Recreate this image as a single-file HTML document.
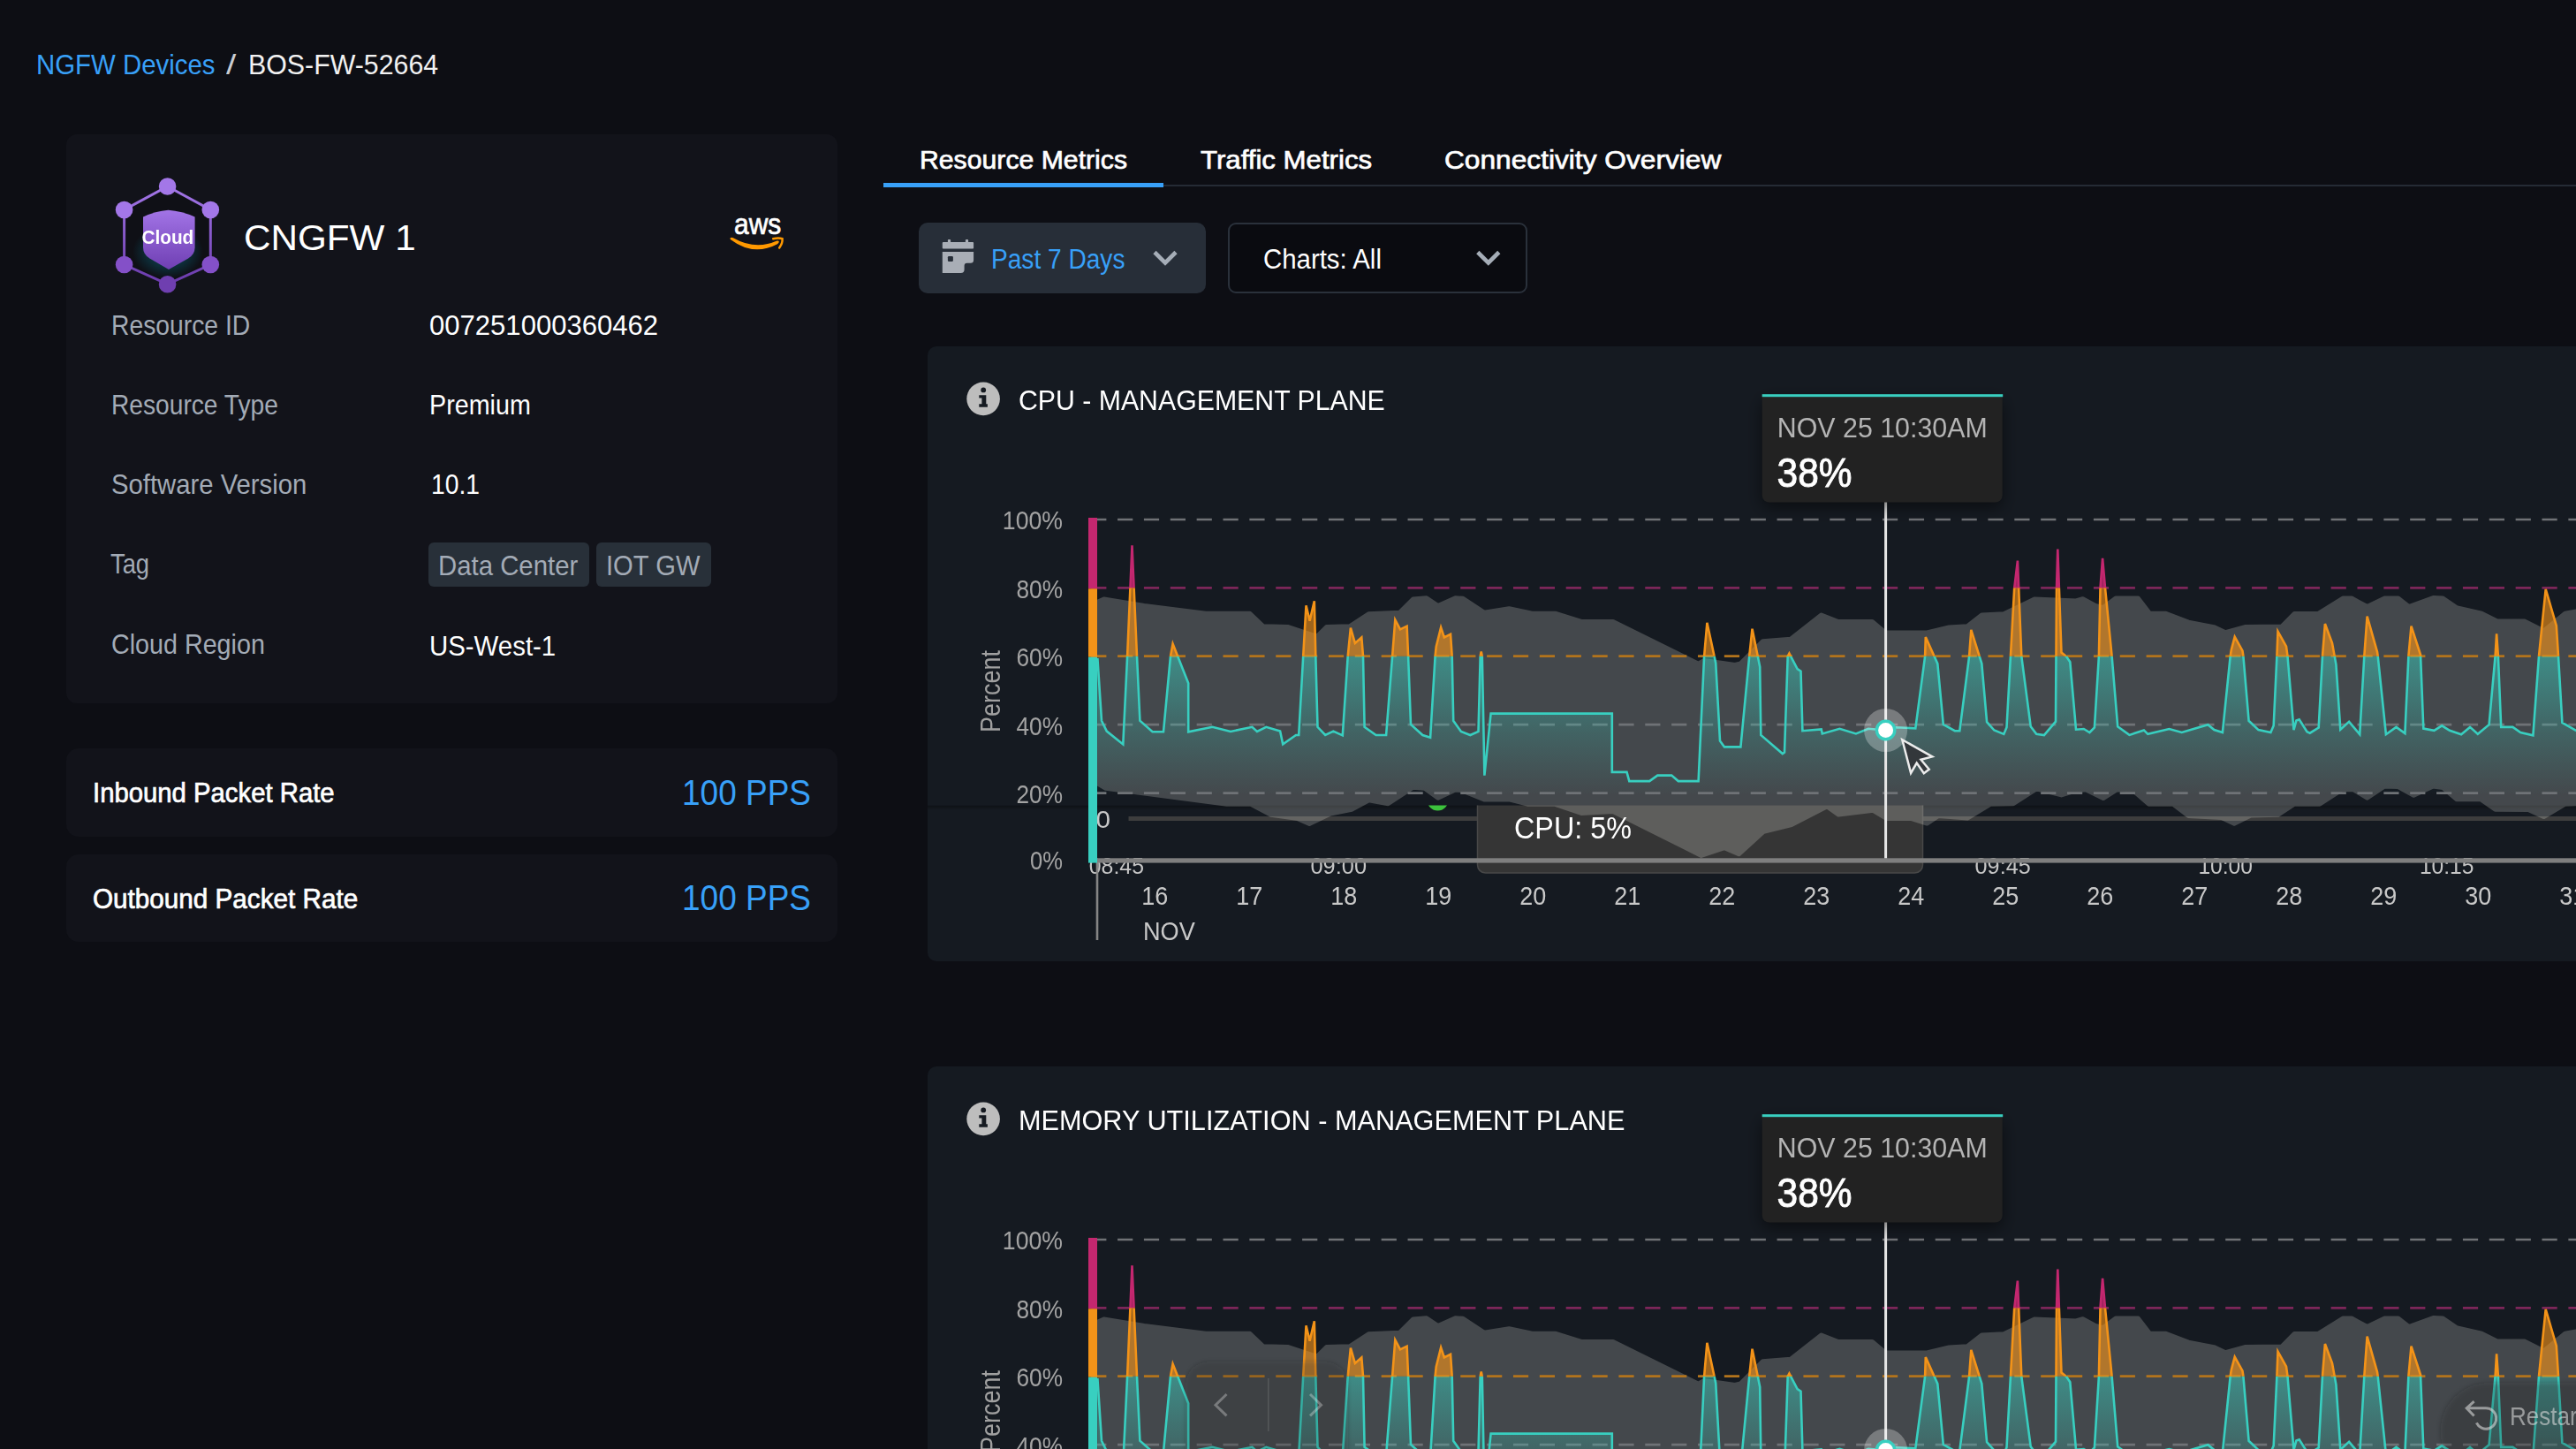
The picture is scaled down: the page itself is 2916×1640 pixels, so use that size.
<!DOCTYPE html>
<html lang="en">
<head>
<meta charset="utf-8">
<title>NGFW Devices / BOS-FW-52664</title>
<style>
*{box-sizing:border-box;margin:0;padding:0}
html,body{width:2916px;height:1640px;overflow:hidden;background:#0d0e14}
body{font-family:'Liberation Sans',sans-serif;color:#fff;position:relative}
#app{position:absolute;left:0;top:0;width:2916px;height:1640px;overflow:hidden}
.t{position:absolute;white-space:nowrap;line-height:1;transform-origin:0 0;display:block}
.box{position:absolute}
.card{background:#12131a;border-radius:12px}
.chip{background:#283039;border-radius:6px}
.btn{border-radius:10px}
svg{position:absolute;left:0;top:0;overflow:visible;will-change:transform}
svg text{font-family:'Liberation Sans',sans-serif}
</style>
</head>
<body>
<div id="app">

<nav class="crumbs">
<span class="t" style="left:40.5px;top:58.4px;font-size:31.4px;color:#38a0f8;transform:scaleX(0.9363);">NGFW Devices</span>
<span class="t" style="left:256.0px;top:58.4px;font-size:31.4px;color:#c9ccd2;transform:scaleX(1.2947);">/</span>
<span class="t" style="left:280.5px;top:58.4px;font-size:31.4px;color:#f2f2f2;transform:scaleX(0.9661);">BOS-FW-52664</span>
</nav>
<section class="box card" style="left:75px;top:152px;width:873px;height:644px"></section>
<div class="device-head">
<span class="t" style="left:275.8px;top:248.6px;font-size:40.0px;color:#ffffff;transform:scaleX(1.0553);">CNGFW 1</span>
<span class="t" style="left:831.0px;top:235.9px;font-size:34.0px;color:#ffffff;transform:scaleX(0.8814);-webkit-text-stroke:.7px #ffffff;">aws</span>
</div>
<dl class="props">
<dt><span class="t" style="left:126.0px;top:353.1px;font-size:30.5px;color:#a3abb6;transform:scaleX(0.9272);">Resource ID</span></dt>
<dd><span class="t" style="left:485.7px;top:353.1px;font-size:30.5px;color:#ffffff;transform:scaleX(1.0184);">007251000360462</span></dd>
<dt><span class="t" style="left:126.0px;top:443.1px;font-size:30.5px;color:#a3abb6;transform:scaleX(0.9231);">Resource Type</span></dt>
<dd><span class="t" style="left:485.7px;top:443.1px;font-size:30.5px;color:#ffffff;transform:scaleX(0.9409);">Premium</span></dd>
<dt><span class="t" style="left:126.0px;top:533.1px;font-size:30.5px;color:#a3abb6;transform:scaleX(0.9599);">Software Version</span></dt>
<dd><span class="t" style="left:487.5px;top:533.1px;font-size:30.5px;color:#ffffff;transform:scaleX(0.9276);">10.1</span></dd>
<dt><span class="t" style="left:124.5px;top:623.4px;font-size:30.5px;color:#a3abb6;transform:scaleX(0.8963);">Tag</span></dt>
<dt><span class="t" style="left:126.0px;top:713.5px;font-size:30.5px;color:#a3abb6;transform:scaleX(0.9407);">Cloud Region</span></dt>
<dd><span class="t" style="left:485.7px;top:715.6px;font-size:30.5px;color:#ffffff;transform:scaleX(0.9638);">US-West-1</span></dd>
</dl>
<span class="box chip" style="left:484.5px;top:614px;width:182.5px;height:50px"></span>
<span class="box chip" style="left:674.6px;top:614px;width:130px;height:50px"></span>
<span class="t" style="left:496.0px;top:625.1px;font-size:30.5px;color:#a3abb6;transform:scaleX(0.9624);">Data Center</span>
<span class="t" style="left:685.5px;top:625.1px;font-size:30.5px;color:#a3abb6;transform:scaleX(0.9565);">IOT GW</span>
<section class="box card" style="left:74.5px;top:847px;width:873.5px;height:99.5px;border-radius:14px"></section>
<section class="box card" style="left:74.5px;top:966.7px;width:873.5px;height:99.5px;border-radius:14px"></section>
<span class="t" style="left:104.8px;top:882.2px;font-size:31.3px;color:#ffffff;transform:scaleX(0.9360);-webkit-text-stroke:.7px #ffffff;">Inbound Packet Rate</span>
<span class="t" style="left:772.0px;top:876.5px;font-size:40.7px;color:#38a0f8;transform:scaleX(0.9089);">100 PPS</span>
<span class="t" style="left:104.8px;top:1002.3px;font-size:31.3px;color:#ffffff;transform:scaleX(0.9479);-webkit-text-stroke:.7px #ffffff;">Outbound Packet Rate</span>
<span class="t" style="left:772.0px;top:996.3px;font-size:40.7px;color:#38a0f8;transform:scaleX(0.9089);">100 PPS</span>
<div class="tabs">
<div class="box" style="left:1000px;top:209px;width:1930px;height:2.4px;background:#252b35"></div>
<div class="box" style="left:1000px;top:207px;width:317px;height:4.5px;background:#38a0f8"></div>
<span class="t" style="left:1041.0px;top:166.0px;font-size:30.1px;color:#ffffff;transform:scaleX(1.0039);-webkit-text-stroke:.7px #ffffff;">Resource Metrics</span>
<span class="t" style="left:1358.9px;top:166.0px;font-size:30.1px;color:#ffffff;transform:scaleX(1.0367);-webkit-text-stroke:.7px #ffffff;">Traffic Metrics</span>
<span class="t" style="left:1635.3px;top:166.0px;font-size:30.1px;color:#ffffff;transform:scaleX(1.0524);-webkit-text-stroke:.7px #ffffff;">Connectivity Overview</span>
</div>
<div class="box btn" style="left:1039.5px;top:251.5px;width:325px;height:80px;background:#272e38"></div>
<div class="box btn" style="left:1390px;top:252px;width:339px;height:79.5px;background:#0a0b10;border:2.4px solid #2a313b;border-radius:9px"></div>
<span class="t" style="left:1121.5px;top:278.7px;font-size:30.8px;color:#38a0f8;transform:scaleX(0.9120);">Past 7 Days</span>
<span class="t" style="left:1429.5px;top:278.7px;font-size:30.8px;color:#ffffff;transform:scaleX(0.9543);">Charts: All</span>
<svg id="gfx" width="2916" height="1640" viewBox="0 0 2916 1640">
<defs><filter id="blur" x="-20%" y="-20%" width="140%" height="150%"><feGaussianBlur stdDeviation="9"/></filter><filter id="soft" x="-10%" y="-10%" width="120%" height="120%"><feGaussianBlur stdDeviation="2.5"/></filter><linearGradient id="shield" x1="0" y1="0" x2="0" y2="1"><stop offset="0" stop-color="#a274e6"/><stop offset="1" stop-color="#6f3fb3"/></linearGradient><linearGradient id="hexg" x1="0" y1="0" x2="0" y2="1"><stop offset="0" stop-color="#a377e8"/><stop offset="1" stop-color="#6a3aab"/></linearGradient><radialGradient id="glow"><stop offset=".55" stop-color="#0a4a5a" stop-opacity=".55"/><stop offset="1" stop-color="#0a4a5a" stop-opacity="0"/></radialGradient></defs>
<g class="cloud-icon">
<polygon points="189.6,211.0 238.3,237.5 238.3,299.5 189.6,321.7 140.6,299.5 140.6,237.5" fill="#0f1016" stroke="url(#hexg)" stroke-width="3"/>
<ellipse cx="190" cy="285" rx="40" ry="30" fill="url(#glow)"/>
<circle cx="189.6" cy="211" r="9.8" fill="#a377e8"/>
<circle cx="238.3" cy="237.5" r="9.8" fill="#a377e8"/>
<circle cx="238.3" cy="299.5" r="9.8" fill="#8450c8"/>
<circle cx="189.6" cy="321.7" r="9.8" fill="#6f3fb0"/>
<circle cx="140.6" cy="299.5" r="9.8" fill="#8450c8"/>
<circle cx="140.6" cy="237.5" r="9.8" fill="#a377e8"/>
<path d="M162 245.5Q176 239 190.5 237.8Q206 239 220.6 245.5V280Q220.6 288 213 292.5L191 305L169.5 292.5Q162 288 162 280Z" fill="url(#shield)"/>
<text x="160.5" y="275.8" font-size="21.2" textLength="58.8" lengthAdjust="spacingAndGlyphs" fill="#ffffff" font-weight="700">Cloud</text>
</g>
<g class="aws-smile"><path d="M826.6 269.4Q828 268 830 269.2Q855 283.5 879.5 272.6Q881.6 272 881.8 273.6Q882 275 880 276.2Q853 290.5 827.2 271.2Q826 270.2 826.6 269.4Z" fill="#ff9900"/><path d="M875.2 270.2Q881.5 268.6 885.6 270.2Q886 275.5 882.2 280.4" fill="none" stroke="#ff9900" stroke-width="2.5" stroke-linecap="round"/></g>
<g class="cal-icon" fill="#a9aeb6"><rect x="1066.8" y="273.9" width="35.3" height="7.6" rx="1"/><rect x="1072.9" y="271" width="3.2" height="4" rx="1"/><rect x="1092.9" y="271" width="3.2" height="4" rx="1"/><path d="M1066.8 285.1h35.3v9.2q0 3.5-3.5 3.5h-4q-3 0-3 3v4.2q0 4-4 4h-20.8z"/><rect x="1072.9" y="290" width="6" height="6" rx="1.2" fill="#272e38"/></g>
<path d="M1307 285.5l12 12l12-12M1672.8 285.5l12 12l12-12" fill="none" stroke="#a5adb7" stroke-width="4.6"/>
<g class="chart" id="chart1">
<rect class="panel" x="1050" y="392" width="1900" height="696" rx="10" fill="#151a21"/>
<defs>
<linearGradient id="c1g" gradientUnits="userSpaceOnUse" x1="0" y1="742.7" x2="0" y2="900"><stop offset="0" stop-color="#38cfc0" stop-opacity=".5"/><stop offset=".55" stop-color="#38cfc0" stop-opacity=".2"/><stop offset="1" stop-color="#38cfc0" stop-opacity="0"/></linearGradient>
<linearGradient id="c1s" x1="0" y1="0" x2="0" y2="1"><stop offset="0" stop-color="#000" stop-opacity=".4"/><stop offset="1" stop-color="#000" stop-opacity="0"/></linearGradient>
<clipPath id="c1t"><rect x="1242" y="742.7" width="1700" height="241.29999999999995"/></clipPath>
<clipPath id="c1o"><rect x="1242" y="665.3" width="1700" height="77.40000000000009"/></clipPath>
<clipPath id="c1p"><rect x="1242" y="500" width="1700" height="165.29999999999995"/></clipPath>
<clipPath id="c1u"><rect x="1040" y="911.5" width="1900" height="90"/></clipPath>
</defs>
<g class="underlay" clip-path="url(#c1u)">
<rect x="1050" y="911.5" width="1900" height="5" fill="url(#c1s)"/>
<text x="1240.5" y="936.5" font-size="28.3" textLength="16.5" lengthAdjust="spacingAndGlyphs" fill="#c9c9c9">0</text>
<rect x="1277.5" y="924" width="1700" height="5" fill="#3d3d3d"/>
<circle cx="1627.5" cy="905.5" r="12" fill="#3cc23c"/>
<rect x="1672.5" y="860" width="504" height="128" rx="9" fill="#353535" stroke="#484848" stroke-width="1.5"/>
<text x="1714.0" y="948.6" font-size="35.3" textLength="133.0" lengthAdjust="spacingAndGlyphs" fill="#ffffff">CPU: 5%</text>
</g>
<text x="1232.8" y="988.8" font-size="25.6" textLength="62.2" lengthAdjust="spacingAndGlyphs" fill="#c6c6c6">08:45</text>
<text x="1483.5" y="988.8" font-size="25.6" textLength="63.5" lengthAdjust="spacingAndGlyphs" fill="#c6c6c6">09:00</text>
<text x="2235.6" y="988.8" font-size="25.6" textLength="63.1" lengthAdjust="spacingAndGlyphs" fill="#c6c6c6">09:45</text>
<text x="2488.4" y="988.8" font-size="25.6" textLength="61.6" lengthAdjust="spacingAndGlyphs" fill="#c6c6c6">10:00</text>
<text x="2738.9" y="988.8" font-size="25.6" textLength="61.6" lengthAdjust="spacingAndGlyphs" fill="#c6c6c6">10:15</text>
<g class="band" opacity=".2"><polygon points="1242.4,681.2 1249.6,677.9 1295.2,685.5 1364.8,694.2 1414.8,694.2 1430.0,708.8 1458.3,709.5 1490.9,720.3 1501.7,709.5 1527.8,708.8 1549.6,694.7 1584.3,693.2 1599.6,677.9 1614.8,676.8 1627.8,685.5 1647.4,676.8 1656.1,677.3 1680.0,693.2 1708.3,688.8 1734.3,694.2 1760.4,694.2 1790.0,703.4 1825.9,703.4 1922.6,751.2 1929.1,747.5 1963.9,752.5 1970.4,750.8 1995.4,725.8 2027.0,723.2 2061.7,696.0 2080.2,703.4 2119.3,703.4 2134.1,716.0 2181.3,716.0 2206.3,709.9 2227.0,708.8 2243.3,696.0 2268.3,694.7 2303.0,677.9 2350.0,679.9 2357.7,677.7 2372.0,685.4 2380.8,687.6 2395.0,677.0 2420.3,677.0 2433.5,694.2 2451.1,694.2 2477.4,704.1 2506.0,709.6 2519.2,715.7 2541.2,709.6 2582.9,709.1 2597.2,694.6 2624.7,694.2 2652.1,677.0 2662.0,677.0 2679.6,686.5 2699.4,677.0 2714.7,677.0 2726.8,686.5 2754.3,676.6 2765.3,677.0 2780.7,687.6 2809.2,694.2 2826.8,703.0 2857.6,703.0 2879.5,714.0 2903.7,694.2 2916.0,692.0 2943.3,692.0 2943.3,909.8 2916.0,909.8 2903.7,910.2 2879.5,924.5 2862.0,916.4 2824.6,916.2 2808.1,904.7 2780.7,904.7 2765.3,891.6 2754.3,890.0 2732.3,900.3 2714.7,890.5 2699.4,890.0 2679.6,903.2 2664.2,893.8 2651.0,893.8 2625.8,910.2 2597.2,910.2 2578.5,922.3 2547.8,923.0 2529.1,932.2 2514.8,925.6 2477.4,923.4 2459.9,910.2 2432.4,910.2 2414.8,894.9 2396.1,893.8 2380.8,903.6 2361.0,893.8 2350.0,894.9 2333.5,899.9 2305.2,892.9 2279.1,909.7 2253.0,910.3 2227.0,926.0 2194.3,923.4 2181.3,932.1 2163.9,926.6 2135.7,926.6 2120.4,917.3 2081.3,922.1 2068.3,912.9 2028.0,933.6 1996.5,941.2 1968.3,966.8 1952.0,959.7 1925.9,968.4 1825.9,918.4 1790.0,920.5 1760.4,910.3 1730.0,910.3 1708.3,904.9 1680.0,904.9 1653.9,894.5 1647.4,894.0 1627.8,903.2 1612.6,892.3 1599.6,891.2 1571.3,909.7 1549.6,905.8 1530.0,916.2 1506.1,921.0 1482.2,932.5 1469.1,926.6 1438.7,922.3 1415.9,910.3 1388.7,910.3 1251.7,892.3 1242.4,886.8" fill="#fffff6" stroke="#fffff6" stroke-width="5" stroke-linejoin="round"/></g>
<line x1="1235.2" x2="2920" y1="588.0" y2="588.0" stroke="#6f7276" stroke-opacity="1" stroke-width="2.7" stroke-dasharray="17.2 12.66"/>
<line x1="1235.2" x2="2920" y1="665.3" y2="665.3" stroke="#7c2659" stroke-opacity="1" stroke-width="2.7" stroke-dasharray="17.2 12.66"/>
<line x1="1235.2" x2="2920" y1="742.7" y2="742.7" stroke="#b3741c" stroke-opacity="1" stroke-width="2.7" stroke-dasharray="17.2 12.66"/>
<line x1="1235.2" x2="2920" y1="820.2" y2="820.2" stroke="#6f7276" stroke-opacity="1" stroke-width="2.7" stroke-dasharray="17.2 12.66"/>
<line x1="1235.2" x2="2920" y1="897.7" y2="897.7" stroke="#6f7276" stroke-opacity="1" stroke-width="2.7" stroke-dasharray="17.2 12.66"/>
<polygon class="fill-teal" clip-path="url(#c1t)" points="1242.4,974.0 1242.4,745.0 1247.0,815.7 1252.8,827.6 1271.3,842.4 1276.1,742.8 1281.5,617.4 1287.0,742.8 1290.4,815.7 1304.6,828.3 1317.0,828.3 1325.0,742.8 1327.6,728.7 1345.2,773.3 1345.2,828.3 1372.4,822.8 1393.0,828.0 1417.4,822.8 1423.0,828.0 1433.3,822.8 1449.1,827.6 1452.2,842.2 1467.0,832.0 1470.2,832.0 1475.2,742.8 1478.5,685.2 1482.6,702.6 1487.8,680.2 1489.3,742.8 1491.5,822.8 1500.2,832.0 1509.3,827.6 1519.8,832.4 1525.7,742.8 1528.9,710.7 1533.9,728.0 1541.3,721.5 1543.0,742.8 1544.6,822.8 1557.6,832.0 1569.1,832.0 1576.1,742.8 1579.3,701.5 1585.0,712.4 1592.6,708.7 1594.1,742.8 1597.0,820.0 1610.4,832.0 1619.1,834.8 1624.6,742.8 1625.7,732.0 1631.1,710.2 1634.8,721.5 1642.0,717.8 1643.7,742.8 1645.2,815.7 1653.9,828.0 1664.3,832.0 1673.5,828.0 1675.7,742.8 1676.7,737.4 1677.8,742.8 1680.4,877.6 1687.6,807.6 1790.0,807.6 1824.8,807.6 1824.8,873.9 1841.5,873.9 1844.3,884.1 1867.2,884.1 1876.3,877.6 1892.2,877.6 1899.8,884.1 1922.6,884.1 1929.1,742.8 1932.4,704.8 1942.2,750.4 1947.0,838.5 1952.0,845.4 1970.4,845.4 1980.2,742.8 1983.5,711.7 1992.2,754.8 1993.3,832.0 2017.8,853.0 2020.0,851.5 2023.7,742.8 2025.4,739.6 2034.6,757.0 2038.5,759.6 2040.4,827.2 2061.7,825.4 2062.8,830.4 2082.4,824.8 2100.9,830.4 2115.0,824.8 2134.1,826.5 2146.5,823.3 2168.3,824.3 2179.1,742.8 2179.8,721.1 2193.3,751.1 2199.8,820.0 2212.8,827.2 2218.3,827.2 2229.1,742.8 2231.3,712.8 2243.3,751.1 2249.1,817.2 2257.4,826.5 2268.3,830.9 2271.5,823.3 2280.2,665.7 2283.9,634.6 2288.3,742.8 2298.7,822.2 2305.2,830.9 2313.9,832.0 2327.0,816.7 2328.0,665.7 2329.3,621.5 2333.5,738.5 2338.9,742.8 2343.3,749.3 2350.0,825.7 2358.8,825.0 2365.4,829.0 2370.9,823.5 2375.9,742.7 2377.5,665.3 2380.1,631.9 2383.0,665.3 2390.6,742.7 2397.2,822.4 2410.4,831.9 2426.9,826.4 2431.3,830.8 2455.5,825.0 2469.7,829.0 2499.4,820.2 2506.4,826.1 2515.9,829.0 2524.7,742.7 2525.8,735.6 2529.7,720.7 2538.5,736.7 2539.4,742.7 2545.6,815.8 2556.5,826.1 2570.4,829.0 2573.7,821.3 2577.4,742.7 2578.5,714.7 2588.0,731.7 2589.5,742.7 2596.5,826.1 2599.4,815.4 2602.7,814.3 2611.5,828.3 2614.8,829.7 2624.7,823.5 2629.0,742.7 2631.9,706.0 2640.0,727.9 2644.4,752.1 2649.3,825.7 2659.1,816.9 2671.2,831.2 2676.3,742.7 2679.6,697.6 2691.0,737.8 2691.7,742.7 2700.9,831.2 2712.5,822.9 2722.4,830.1 2726.4,742.7 2729.5,708.6 2740.0,741.1 2743.3,824.6 2755.4,826.8 2764.2,821.3 2773.0,826.8 2786.1,831.2 2796.0,822.9 2804.8,830.8 2817.6,820.2 2824.6,742.7 2826.1,717.4 2827.9,742.7 2831.2,822.9 2844.4,822.9 2853.2,829.0 2867.4,832.3 2874.0,742.7 2881.7,666.8 2893.8,708.2 2896.0,742.7 2900.4,818.0 2916.0,826.8 2943.3,836.7 2943.3,974.0" fill="url(#c1g)"/>
<polygon class="fill-orange" clip-path="url(#c1o)" points="1242.4,974.0 1242.4,745.0 1247.0,815.7 1252.8,827.6 1271.3,842.4 1276.1,742.8 1281.5,617.4 1287.0,742.8 1290.4,815.7 1304.6,828.3 1317.0,828.3 1325.0,742.8 1327.6,728.7 1345.2,773.3 1345.2,828.3 1372.4,822.8 1393.0,828.0 1417.4,822.8 1423.0,828.0 1433.3,822.8 1449.1,827.6 1452.2,842.2 1467.0,832.0 1470.2,832.0 1475.2,742.8 1478.5,685.2 1482.6,702.6 1487.8,680.2 1489.3,742.8 1491.5,822.8 1500.2,832.0 1509.3,827.6 1519.8,832.4 1525.7,742.8 1528.9,710.7 1533.9,728.0 1541.3,721.5 1543.0,742.8 1544.6,822.8 1557.6,832.0 1569.1,832.0 1576.1,742.8 1579.3,701.5 1585.0,712.4 1592.6,708.7 1594.1,742.8 1597.0,820.0 1610.4,832.0 1619.1,834.8 1624.6,742.8 1625.7,732.0 1631.1,710.2 1634.8,721.5 1642.0,717.8 1643.7,742.8 1645.2,815.7 1653.9,828.0 1664.3,832.0 1673.5,828.0 1675.7,742.8 1676.7,737.4 1677.8,742.8 1680.4,877.6 1687.6,807.6 1790.0,807.6 1824.8,807.6 1824.8,873.9 1841.5,873.9 1844.3,884.1 1867.2,884.1 1876.3,877.6 1892.2,877.6 1899.8,884.1 1922.6,884.1 1929.1,742.8 1932.4,704.8 1942.2,750.4 1947.0,838.5 1952.0,845.4 1970.4,845.4 1980.2,742.8 1983.5,711.7 1992.2,754.8 1993.3,832.0 2017.8,853.0 2020.0,851.5 2023.7,742.8 2025.4,739.6 2034.6,757.0 2038.5,759.6 2040.4,827.2 2061.7,825.4 2062.8,830.4 2082.4,824.8 2100.9,830.4 2115.0,824.8 2134.1,826.5 2146.5,823.3 2168.3,824.3 2179.1,742.8 2179.8,721.1 2193.3,751.1 2199.8,820.0 2212.8,827.2 2218.3,827.2 2229.1,742.8 2231.3,712.8 2243.3,751.1 2249.1,817.2 2257.4,826.5 2268.3,830.9 2271.5,823.3 2280.2,665.7 2283.9,634.6 2288.3,742.8 2298.7,822.2 2305.2,830.9 2313.9,832.0 2327.0,816.7 2328.0,665.7 2329.3,621.5 2333.5,738.5 2338.9,742.8 2343.3,749.3 2350.0,825.7 2358.8,825.0 2365.4,829.0 2370.9,823.5 2375.9,742.7 2377.5,665.3 2380.1,631.9 2383.0,665.3 2390.6,742.7 2397.2,822.4 2410.4,831.9 2426.9,826.4 2431.3,830.8 2455.5,825.0 2469.7,829.0 2499.4,820.2 2506.4,826.1 2515.9,829.0 2524.7,742.7 2525.8,735.6 2529.7,720.7 2538.5,736.7 2539.4,742.7 2545.6,815.8 2556.5,826.1 2570.4,829.0 2573.7,821.3 2577.4,742.7 2578.5,714.7 2588.0,731.7 2589.5,742.7 2596.5,826.1 2599.4,815.4 2602.7,814.3 2611.5,828.3 2614.8,829.7 2624.7,823.5 2629.0,742.7 2631.9,706.0 2640.0,727.9 2644.4,752.1 2649.3,825.7 2659.1,816.9 2671.2,831.2 2676.3,742.7 2679.6,697.6 2691.0,737.8 2691.7,742.7 2700.9,831.2 2712.5,822.9 2722.4,830.1 2726.4,742.7 2729.5,708.6 2740.0,741.1 2743.3,824.6 2755.4,826.8 2764.2,821.3 2773.0,826.8 2786.1,831.2 2796.0,822.9 2804.8,830.8 2817.6,820.2 2824.6,742.7 2826.1,717.4 2827.9,742.7 2831.2,822.9 2844.4,822.9 2853.2,829.0 2867.4,832.3 2874.0,742.7 2881.7,666.8 2893.8,708.2 2896.0,742.7 2900.4,818.0 2916.0,826.8 2943.3,836.7 2943.3,974.0" fill="#f39318" fill-opacity=".62"/>
<polygon class="fill-pink" clip-path="url(#c1p)" points="1242.4,974.0 1242.4,745.0 1247.0,815.7 1252.8,827.6 1271.3,842.4 1276.1,742.8 1281.5,617.4 1287.0,742.8 1290.4,815.7 1304.6,828.3 1317.0,828.3 1325.0,742.8 1327.6,728.7 1345.2,773.3 1345.2,828.3 1372.4,822.8 1393.0,828.0 1417.4,822.8 1423.0,828.0 1433.3,822.8 1449.1,827.6 1452.2,842.2 1467.0,832.0 1470.2,832.0 1475.2,742.8 1478.5,685.2 1482.6,702.6 1487.8,680.2 1489.3,742.8 1491.5,822.8 1500.2,832.0 1509.3,827.6 1519.8,832.4 1525.7,742.8 1528.9,710.7 1533.9,728.0 1541.3,721.5 1543.0,742.8 1544.6,822.8 1557.6,832.0 1569.1,832.0 1576.1,742.8 1579.3,701.5 1585.0,712.4 1592.6,708.7 1594.1,742.8 1597.0,820.0 1610.4,832.0 1619.1,834.8 1624.6,742.8 1625.7,732.0 1631.1,710.2 1634.8,721.5 1642.0,717.8 1643.7,742.8 1645.2,815.7 1653.9,828.0 1664.3,832.0 1673.5,828.0 1675.7,742.8 1676.7,737.4 1677.8,742.8 1680.4,877.6 1687.6,807.6 1790.0,807.6 1824.8,807.6 1824.8,873.9 1841.5,873.9 1844.3,884.1 1867.2,884.1 1876.3,877.6 1892.2,877.6 1899.8,884.1 1922.6,884.1 1929.1,742.8 1932.4,704.8 1942.2,750.4 1947.0,838.5 1952.0,845.4 1970.4,845.4 1980.2,742.8 1983.5,711.7 1992.2,754.8 1993.3,832.0 2017.8,853.0 2020.0,851.5 2023.7,742.8 2025.4,739.6 2034.6,757.0 2038.5,759.6 2040.4,827.2 2061.7,825.4 2062.8,830.4 2082.4,824.8 2100.9,830.4 2115.0,824.8 2134.1,826.5 2146.5,823.3 2168.3,824.3 2179.1,742.8 2179.8,721.1 2193.3,751.1 2199.8,820.0 2212.8,827.2 2218.3,827.2 2229.1,742.8 2231.3,712.8 2243.3,751.1 2249.1,817.2 2257.4,826.5 2268.3,830.9 2271.5,823.3 2280.2,665.7 2283.9,634.6 2288.3,742.8 2298.7,822.2 2305.2,830.9 2313.9,832.0 2327.0,816.7 2328.0,665.7 2329.3,621.5 2333.5,738.5 2338.9,742.8 2343.3,749.3 2350.0,825.7 2358.8,825.0 2365.4,829.0 2370.9,823.5 2375.9,742.7 2377.5,665.3 2380.1,631.9 2383.0,665.3 2390.6,742.7 2397.2,822.4 2410.4,831.9 2426.9,826.4 2431.3,830.8 2455.5,825.0 2469.7,829.0 2499.4,820.2 2506.4,826.1 2515.9,829.0 2524.7,742.7 2525.8,735.6 2529.7,720.7 2538.5,736.7 2539.4,742.7 2545.6,815.8 2556.5,826.1 2570.4,829.0 2573.7,821.3 2577.4,742.7 2578.5,714.7 2588.0,731.7 2589.5,742.7 2596.5,826.1 2599.4,815.4 2602.7,814.3 2611.5,828.3 2614.8,829.7 2624.7,823.5 2629.0,742.7 2631.9,706.0 2640.0,727.9 2644.4,752.1 2649.3,825.7 2659.1,816.9 2671.2,831.2 2676.3,742.7 2679.6,697.6 2691.0,737.8 2691.7,742.7 2700.9,831.2 2712.5,822.9 2722.4,830.1 2726.4,742.7 2729.5,708.6 2740.0,741.1 2743.3,824.6 2755.4,826.8 2764.2,821.3 2773.0,826.8 2786.1,831.2 2796.0,822.9 2804.8,830.8 2817.6,820.2 2824.6,742.7 2826.1,717.4 2827.9,742.7 2831.2,822.9 2844.4,822.9 2853.2,829.0 2867.4,832.3 2874.0,742.7 2881.7,666.8 2893.8,708.2 2896.0,742.7 2900.4,818.0 2916.0,826.8 2943.3,836.7 2943.3,974.0" fill="#c4276f" fill-opacity=".8"/>
<polyline clip-path="url(#c1t)" points="1242.4,745.0 1247.0,815.7 1252.8,827.6 1271.3,842.4 1276.1,742.8 1281.5,617.4 1287.0,742.8 1290.4,815.7 1304.6,828.3 1317.0,828.3 1325.0,742.8 1327.6,728.7 1345.2,773.3 1345.2,828.3 1372.4,822.8 1393.0,828.0 1417.4,822.8 1423.0,828.0 1433.3,822.8 1449.1,827.6 1452.2,842.2 1467.0,832.0 1470.2,832.0 1475.2,742.8 1478.5,685.2 1482.6,702.6 1487.8,680.2 1489.3,742.8 1491.5,822.8 1500.2,832.0 1509.3,827.6 1519.8,832.4 1525.7,742.8 1528.9,710.7 1533.9,728.0 1541.3,721.5 1543.0,742.8 1544.6,822.8 1557.6,832.0 1569.1,832.0 1576.1,742.8 1579.3,701.5 1585.0,712.4 1592.6,708.7 1594.1,742.8 1597.0,820.0 1610.4,832.0 1619.1,834.8 1624.6,742.8 1625.7,732.0 1631.1,710.2 1634.8,721.5 1642.0,717.8 1643.7,742.8 1645.2,815.7 1653.9,828.0 1664.3,832.0 1673.5,828.0 1675.7,742.8 1676.7,737.4 1677.8,742.8 1680.4,877.6 1687.6,807.6 1790.0,807.6 1824.8,807.6 1824.8,873.9 1841.5,873.9 1844.3,884.1 1867.2,884.1 1876.3,877.6 1892.2,877.6 1899.8,884.1 1922.6,884.1 1929.1,742.8 1932.4,704.8 1942.2,750.4 1947.0,838.5 1952.0,845.4 1970.4,845.4 1980.2,742.8 1983.5,711.7 1992.2,754.8 1993.3,832.0 2017.8,853.0 2020.0,851.5 2023.7,742.8 2025.4,739.6 2034.6,757.0 2038.5,759.6 2040.4,827.2 2061.7,825.4 2062.8,830.4 2082.4,824.8 2100.9,830.4 2115.0,824.8 2134.1,826.5 2146.5,823.3 2168.3,824.3 2179.1,742.8 2179.8,721.1 2193.3,751.1 2199.8,820.0 2212.8,827.2 2218.3,827.2 2229.1,742.8 2231.3,712.8 2243.3,751.1 2249.1,817.2 2257.4,826.5 2268.3,830.9 2271.5,823.3 2280.2,665.7 2283.9,634.6 2288.3,742.8 2298.7,822.2 2305.2,830.9 2313.9,832.0 2327.0,816.7 2328.0,665.7 2329.3,621.5 2333.5,738.5 2338.9,742.8 2343.3,749.3 2350.0,825.7 2358.8,825.0 2365.4,829.0 2370.9,823.5 2375.9,742.7 2377.5,665.3 2380.1,631.9 2383.0,665.3 2390.6,742.7 2397.2,822.4 2410.4,831.9 2426.9,826.4 2431.3,830.8 2455.5,825.0 2469.7,829.0 2499.4,820.2 2506.4,826.1 2515.9,829.0 2524.7,742.7 2525.8,735.6 2529.7,720.7 2538.5,736.7 2539.4,742.7 2545.6,815.8 2556.5,826.1 2570.4,829.0 2573.7,821.3 2577.4,742.7 2578.5,714.7 2588.0,731.7 2589.5,742.7 2596.5,826.1 2599.4,815.4 2602.7,814.3 2611.5,828.3 2614.8,829.7 2624.7,823.5 2629.0,742.7 2631.9,706.0 2640.0,727.9 2644.4,752.1 2649.3,825.7 2659.1,816.9 2671.2,831.2 2676.3,742.7 2679.6,697.6 2691.0,737.8 2691.7,742.7 2700.9,831.2 2712.5,822.9 2722.4,830.1 2726.4,742.7 2729.5,708.6 2740.0,741.1 2743.3,824.6 2755.4,826.8 2764.2,821.3 2773.0,826.8 2786.1,831.2 2796.0,822.9 2804.8,830.8 2817.6,820.2 2824.6,742.7 2826.1,717.4 2827.9,742.7 2831.2,822.9 2844.4,822.9 2853.2,829.0 2867.4,832.3 2874.0,742.7 2881.7,666.8 2893.8,708.2 2896.0,742.7 2900.4,818.0 2916.0,826.8 2943.3,836.7" fill="none" stroke="#38cfc0" stroke-width="2.6" stroke-linejoin="miter"/>
<polyline clip-path="url(#c1o)" points="1242.4,745.0 1247.0,815.7 1252.8,827.6 1271.3,842.4 1276.1,742.8 1281.5,617.4 1287.0,742.8 1290.4,815.7 1304.6,828.3 1317.0,828.3 1325.0,742.8 1327.6,728.7 1345.2,773.3 1345.2,828.3 1372.4,822.8 1393.0,828.0 1417.4,822.8 1423.0,828.0 1433.3,822.8 1449.1,827.6 1452.2,842.2 1467.0,832.0 1470.2,832.0 1475.2,742.8 1478.5,685.2 1482.6,702.6 1487.8,680.2 1489.3,742.8 1491.5,822.8 1500.2,832.0 1509.3,827.6 1519.8,832.4 1525.7,742.8 1528.9,710.7 1533.9,728.0 1541.3,721.5 1543.0,742.8 1544.6,822.8 1557.6,832.0 1569.1,832.0 1576.1,742.8 1579.3,701.5 1585.0,712.4 1592.6,708.7 1594.1,742.8 1597.0,820.0 1610.4,832.0 1619.1,834.8 1624.6,742.8 1625.7,732.0 1631.1,710.2 1634.8,721.5 1642.0,717.8 1643.7,742.8 1645.2,815.7 1653.9,828.0 1664.3,832.0 1673.5,828.0 1675.7,742.8 1676.7,737.4 1677.8,742.8 1680.4,877.6 1687.6,807.6 1790.0,807.6 1824.8,807.6 1824.8,873.9 1841.5,873.9 1844.3,884.1 1867.2,884.1 1876.3,877.6 1892.2,877.6 1899.8,884.1 1922.6,884.1 1929.1,742.8 1932.4,704.8 1942.2,750.4 1947.0,838.5 1952.0,845.4 1970.4,845.4 1980.2,742.8 1983.5,711.7 1992.2,754.8 1993.3,832.0 2017.8,853.0 2020.0,851.5 2023.7,742.8 2025.4,739.6 2034.6,757.0 2038.5,759.6 2040.4,827.2 2061.7,825.4 2062.8,830.4 2082.4,824.8 2100.9,830.4 2115.0,824.8 2134.1,826.5 2146.5,823.3 2168.3,824.3 2179.1,742.8 2179.8,721.1 2193.3,751.1 2199.8,820.0 2212.8,827.2 2218.3,827.2 2229.1,742.8 2231.3,712.8 2243.3,751.1 2249.1,817.2 2257.4,826.5 2268.3,830.9 2271.5,823.3 2280.2,665.7 2283.9,634.6 2288.3,742.8 2298.7,822.2 2305.2,830.9 2313.9,832.0 2327.0,816.7 2328.0,665.7 2329.3,621.5 2333.5,738.5 2338.9,742.8 2343.3,749.3 2350.0,825.7 2358.8,825.0 2365.4,829.0 2370.9,823.5 2375.9,742.7 2377.5,665.3 2380.1,631.9 2383.0,665.3 2390.6,742.7 2397.2,822.4 2410.4,831.9 2426.9,826.4 2431.3,830.8 2455.5,825.0 2469.7,829.0 2499.4,820.2 2506.4,826.1 2515.9,829.0 2524.7,742.7 2525.8,735.6 2529.7,720.7 2538.5,736.7 2539.4,742.7 2545.6,815.8 2556.5,826.1 2570.4,829.0 2573.7,821.3 2577.4,742.7 2578.5,714.7 2588.0,731.7 2589.5,742.7 2596.5,826.1 2599.4,815.4 2602.7,814.3 2611.5,828.3 2614.8,829.7 2624.7,823.5 2629.0,742.7 2631.9,706.0 2640.0,727.9 2644.4,752.1 2649.3,825.7 2659.1,816.9 2671.2,831.2 2676.3,742.7 2679.6,697.6 2691.0,737.8 2691.7,742.7 2700.9,831.2 2712.5,822.9 2722.4,830.1 2726.4,742.7 2729.5,708.6 2740.0,741.1 2743.3,824.6 2755.4,826.8 2764.2,821.3 2773.0,826.8 2786.1,831.2 2796.0,822.9 2804.8,830.8 2817.6,820.2 2824.6,742.7 2826.1,717.4 2827.9,742.7 2831.2,822.9 2844.4,822.9 2853.2,829.0 2867.4,832.3 2874.0,742.7 2881.7,666.8 2893.8,708.2 2896.0,742.7 2900.4,818.0 2916.0,826.8 2943.3,836.7" fill="none" stroke="#f39318" stroke-width="2.6" stroke-linejoin="miter"/>
<polyline clip-path="url(#c1p)" points="1242.4,745.0 1247.0,815.7 1252.8,827.6 1271.3,842.4 1276.1,742.8 1281.5,617.4 1287.0,742.8 1290.4,815.7 1304.6,828.3 1317.0,828.3 1325.0,742.8 1327.6,728.7 1345.2,773.3 1345.2,828.3 1372.4,822.8 1393.0,828.0 1417.4,822.8 1423.0,828.0 1433.3,822.8 1449.1,827.6 1452.2,842.2 1467.0,832.0 1470.2,832.0 1475.2,742.8 1478.5,685.2 1482.6,702.6 1487.8,680.2 1489.3,742.8 1491.5,822.8 1500.2,832.0 1509.3,827.6 1519.8,832.4 1525.7,742.8 1528.9,710.7 1533.9,728.0 1541.3,721.5 1543.0,742.8 1544.6,822.8 1557.6,832.0 1569.1,832.0 1576.1,742.8 1579.3,701.5 1585.0,712.4 1592.6,708.7 1594.1,742.8 1597.0,820.0 1610.4,832.0 1619.1,834.8 1624.6,742.8 1625.7,732.0 1631.1,710.2 1634.8,721.5 1642.0,717.8 1643.7,742.8 1645.2,815.7 1653.9,828.0 1664.3,832.0 1673.5,828.0 1675.7,742.8 1676.7,737.4 1677.8,742.8 1680.4,877.6 1687.6,807.6 1790.0,807.6 1824.8,807.6 1824.8,873.9 1841.5,873.9 1844.3,884.1 1867.2,884.1 1876.3,877.6 1892.2,877.6 1899.8,884.1 1922.6,884.1 1929.1,742.8 1932.4,704.8 1942.2,750.4 1947.0,838.5 1952.0,845.4 1970.4,845.4 1980.2,742.8 1983.5,711.7 1992.2,754.8 1993.3,832.0 2017.8,853.0 2020.0,851.5 2023.7,742.8 2025.4,739.6 2034.6,757.0 2038.5,759.6 2040.4,827.2 2061.7,825.4 2062.8,830.4 2082.4,824.8 2100.9,830.4 2115.0,824.8 2134.1,826.5 2146.5,823.3 2168.3,824.3 2179.1,742.8 2179.8,721.1 2193.3,751.1 2199.8,820.0 2212.8,827.2 2218.3,827.2 2229.1,742.8 2231.3,712.8 2243.3,751.1 2249.1,817.2 2257.4,826.5 2268.3,830.9 2271.5,823.3 2280.2,665.7 2283.9,634.6 2288.3,742.8 2298.7,822.2 2305.2,830.9 2313.9,832.0 2327.0,816.7 2328.0,665.7 2329.3,621.5 2333.5,738.5 2338.9,742.8 2343.3,749.3 2350.0,825.7 2358.8,825.0 2365.4,829.0 2370.9,823.5 2375.9,742.7 2377.5,665.3 2380.1,631.9 2383.0,665.3 2390.6,742.7 2397.2,822.4 2410.4,831.9 2426.9,826.4 2431.3,830.8 2455.5,825.0 2469.7,829.0 2499.4,820.2 2506.4,826.1 2515.9,829.0 2524.7,742.7 2525.8,735.6 2529.7,720.7 2538.5,736.7 2539.4,742.7 2545.6,815.8 2556.5,826.1 2570.4,829.0 2573.7,821.3 2577.4,742.7 2578.5,714.7 2588.0,731.7 2589.5,742.7 2596.5,826.1 2599.4,815.4 2602.7,814.3 2611.5,828.3 2614.8,829.7 2624.7,823.5 2629.0,742.7 2631.9,706.0 2640.0,727.9 2644.4,752.1 2649.3,825.7 2659.1,816.9 2671.2,831.2 2676.3,742.7 2679.6,697.6 2691.0,737.8 2691.7,742.7 2700.9,831.2 2712.5,822.9 2722.4,830.1 2726.4,742.7 2729.5,708.6 2740.0,741.1 2743.3,824.6 2755.4,826.8 2764.2,821.3 2773.0,826.8 2786.1,831.2 2796.0,822.9 2804.8,830.8 2817.6,820.2 2824.6,742.7 2826.1,717.4 2827.9,742.7 2831.2,822.9 2844.4,822.9 2853.2,829.0 2867.4,832.3 2874.0,742.7 2881.7,666.8 2893.8,708.2 2896.0,742.7 2900.4,818.0 2916.0,826.8 2943.3,836.7" fill="none" stroke="#c4276f" stroke-width="2.6" stroke-linejoin="miter"/>
<rect x="1242" y="971.3" width="1700" height="5.3" fill="#7f7f7f"/>
<rect x="1240.7" y="976" width="2.6" height="88" fill="#858585"/>
<rect x="1232" y="586" width="10" height="80.29999999999995" fill="#c4276f"/>
<rect x="1232" y="666.3" width="10" height="77.40000000000009" fill="#f39318"/>
<rect x="1232" y="743.7" width="10" height="232.89999999999998" fill="#38cfc0"/>
<text x="1134.8" y="599.3" font-size="29.4" textLength="68.2" lengthAdjust="spacingAndGlyphs" fill="#a3a3a3">100%</text>
<text x="1150.5" y="676.6" font-size="29.4" textLength="52.5" lengthAdjust="spacingAndGlyphs" fill="#a3a3a3">80%</text>
<text x="1150.5" y="754.0" font-size="29.4" textLength="52.5" lengthAdjust="spacingAndGlyphs" fill="#a3a3a3">60%</text>
<text x="1150.5" y="831.5" font-size="29.4" textLength="52.5" lengthAdjust="spacingAndGlyphs" fill="#a3a3a3">40%</text>
<text x="1150.5" y="909.0" font-size="29.4" textLength="52.5" lengthAdjust="spacingAndGlyphs" fill="#a3a3a3">20%</text>
<text x="1166.0" y="984.0" font-size="29.4" textLength="37.0" lengthAdjust="spacingAndGlyphs" fill="#a3a3a3">0%</text>
<g transform="translate(1132.2 829) rotate(-90)"><text x="0.0" y="0.0" font-size="31.0" textLength="93.0" lengthAdjust="spacingAndGlyphs" fill="#a0a0a0">Percent</text></g>
<text x="1292.2" y="1024.1" font-size="29.1" textLength="30.0" lengthAdjust="spacingAndGlyphs" fill="#c8c8c8">16</text>
<text x="1399.2" y="1024.1" font-size="29.1" textLength="30.0" lengthAdjust="spacingAndGlyphs" fill="#c8c8c8">17</text>
<text x="1506.2" y="1024.1" font-size="29.1" textLength="30.0" lengthAdjust="spacingAndGlyphs" fill="#c8c8c8">18</text>
<text x="1613.2" y="1024.1" font-size="29.1" textLength="30.0" lengthAdjust="spacingAndGlyphs" fill="#c8c8c8">19</text>
<text x="1720.2" y="1024.1" font-size="29.1" textLength="30.0" lengthAdjust="spacingAndGlyphs" fill="#c8c8c8">20</text>
<text x="1827.2" y="1024.1" font-size="29.1" textLength="30.0" lengthAdjust="spacingAndGlyphs" fill="#c8c8c8">21</text>
<text x="1934.2" y="1024.1" font-size="29.1" textLength="30.0" lengthAdjust="spacingAndGlyphs" fill="#c8c8c8">22</text>
<text x="2041.2" y="1024.1" font-size="29.1" textLength="30.0" lengthAdjust="spacingAndGlyphs" fill="#c8c8c8">23</text>
<text x="2148.2" y="1024.1" font-size="29.1" textLength="30.0" lengthAdjust="spacingAndGlyphs" fill="#c8c8c8">24</text>
<text x="2255.2" y="1024.1" font-size="29.1" textLength="30.0" lengthAdjust="spacingAndGlyphs" fill="#c8c8c8">25</text>
<text x="2362.2" y="1024.1" font-size="29.1" textLength="30.0" lengthAdjust="spacingAndGlyphs" fill="#c8c8c8">26</text>
<text x="2469.2" y="1024.1" font-size="29.1" textLength="30.0" lengthAdjust="spacingAndGlyphs" fill="#c8c8c8">27</text>
<text x="2576.2" y="1024.1" font-size="29.1" textLength="30.0" lengthAdjust="spacingAndGlyphs" fill="#c8c8c8">28</text>
<text x="2683.2" y="1024.1" font-size="29.1" textLength="30.0" lengthAdjust="spacingAndGlyphs" fill="#c8c8c8">29</text>
<text x="2790.2" y="1024.1" font-size="29.1" textLength="30.0" lengthAdjust="spacingAndGlyphs" fill="#c8c8c8">30</text>
<text x="2897.2" y="1024.1" font-size="29.1" textLength="30.0" lengthAdjust="spacingAndGlyphs" fill="#c8c8c8">31</text>
<text x="1294.0" y="1063.9" font-size="29.1" textLength="58.8" lengthAdjust="spacingAndGlyphs" fill="#c8c8c8">NOV</text>
<rect x="2133.1" y="560" width="3" height="411.29999999999995" fill="#e6e6e6"/>
<circle cx="2134.6" cy="826.5" r="24.5" fill="#ffffff" fill-opacity=".28"/>
<circle cx="2134.6" cy="826.5" r="10.2" fill="#ffffff" stroke="#38cfc0" stroke-width="3.4"/>
<polygon class="cursor" points="2153.3,837.2 2163.1,875.0 2169.7,863.6 2177.8,875.2 2183.7,870.7 2174.5,859.8 2187.3,856.4" fill="#33373b" stroke="#ececec" stroke-width="2.5" stroke-linejoin="miter"/>
<g class="tooltip"><rect x="1994.7" y="447" width="272" height="121.5" rx="8" fill="#000" fill-opacity=".5" filter="url(#blur)" transform="translate(0 6)"/>
<path d="M1994.7 446.3h272v114.19999999999999a8 8 0 0 1 -8 8h-256a8 8 0 0 1 -8 -8z" fill="#222222"/>
<rect x="1994.7" y="446.2" width="272.5" height="3" fill="#38cfc0"/>
<text x="2011.8" y="494.6" font-size="30.8" textLength="237.9" lengthAdjust="spacingAndGlyphs" fill="#b4b4b4">NOV 25 10:30AM</text>
<text x="2011.6" y="551.2" font-size="46.5" textLength="85.0" lengthAdjust="spacingAndGlyphs" fill="#ffffff" stroke="#ffffff" stroke-width=".9">38%</text>
</g>
<circle cx="1113.1" cy="451.4" r="18.8" fill="#bdbdbd"/>
<circle cx="1113.2" cy="441.4" r="2.9" fill="#151a21"/>
<path d="M1108.3 447.3h8v10h1.6v3.4h-9.6v-3.4h3.1v-6.9h-3.1z" fill="#151a21"/>
<text x="1152.9" y="464.0" font-size="31.4" textLength="414.9" lengthAdjust="spacingAndGlyphs" fill="#ffffff">CPU - MANAGEMENT PLANE</text>
</g>
<g class="chart" id="chart2">
<rect class="panel" x="1050" y="1207" width="1900" height="520" rx="10" fill="#151a21"/>
<defs>
<linearGradient id="c2g" gradientUnits="userSpaceOnUse" x1="0" y1="1557.7" x2="0" y2="1715"><stop offset="0" stop-color="#38cfc0" stop-opacity=".5"/><stop offset=".55" stop-color="#38cfc0" stop-opacity=".2"/><stop offset="1" stop-color="#38cfc0" stop-opacity="0"/></linearGradient>
<linearGradient id="c2s" x1="0" y1="0" x2="0" y2="1"><stop offset="0" stop-color="#000" stop-opacity=".4"/><stop offset="1" stop-color="#000" stop-opacity="0"/></linearGradient>
<clipPath id="c2t"><rect x="1242" y="1557.7" width="1700" height="241.29999999999995"/></clipPath>
<clipPath id="c2o"><rect x="1242" y="1480.3" width="1700" height="77.40000000000009"/></clipPath>
<clipPath id="c2p"><rect x="1242" y="1315" width="1700" height="165.29999999999995"/></clipPath>
<clipPath id="c2u"><rect x="1040" y="1726.5" width="1900" height="90"/></clipPath>
</defs>
<g class="band" opacity=".2"><polygon points="1242.4,1496.2 1249.6,1492.9 1295.2,1500.5 1364.8,1509.2 1414.8,1509.2 1430.0,1523.8 1458.3,1524.5 1490.9,1535.3 1501.7,1524.5 1527.8,1523.8 1549.6,1509.7 1584.3,1508.2 1599.6,1492.9 1614.8,1491.8 1627.8,1500.5 1647.4,1491.8 1656.1,1492.3 1680.0,1508.2 1708.3,1503.8 1734.3,1509.2 1760.4,1509.2 1790.0,1518.4 1825.9,1518.4 1922.6,1566.2 1929.1,1562.5 1963.9,1567.5 1970.4,1565.8 1995.4,1540.8 2027.0,1538.2 2061.7,1511.0 2080.2,1518.4 2119.3,1518.4 2134.1,1531.0 2181.3,1531.0 2206.3,1524.9 2227.0,1523.8 2243.3,1511.0 2268.3,1509.7 2303.0,1492.9 2350.0,1494.9 2357.7,1492.7 2372.0,1500.4 2380.8,1502.6 2395.0,1492.0 2420.3,1492.0 2433.5,1509.2 2451.1,1509.2 2477.4,1519.1 2506.0,1524.6 2519.2,1530.7 2541.2,1524.6 2582.9,1524.1 2597.2,1509.6 2624.7,1509.2 2652.1,1492.0 2662.0,1492.0 2679.6,1501.5 2699.4,1492.0 2714.7,1492.0 2726.8,1501.5 2754.3,1491.6 2765.3,1492.0 2780.7,1502.6 2809.2,1509.2 2826.8,1518.0 2857.6,1518.0 2879.5,1529.0 2903.7,1509.2 2916.0,1507.0 2943.3,1507.0 2943.3,1724.8 2916.0,1724.8 2903.7,1725.2 2879.5,1739.5 2862.0,1731.4 2824.6,1731.2 2808.1,1719.7 2780.7,1719.7 2765.3,1706.6 2754.3,1705.0 2732.3,1715.3 2714.7,1705.5 2699.4,1705.0 2679.6,1718.2 2664.2,1708.8 2651.0,1708.8 2625.8,1725.2 2597.2,1725.2 2578.5,1737.3 2547.8,1738.0 2529.1,1747.2 2514.8,1740.6 2477.4,1738.4 2459.9,1725.2 2432.4,1725.2 2414.8,1709.9 2396.1,1708.8 2380.8,1718.6 2361.0,1708.8 2350.0,1709.9 2333.5,1714.9 2305.2,1707.9 2279.1,1724.7 2253.0,1725.3 2227.0,1741.0 2194.3,1738.4 2181.3,1747.1 2163.9,1741.6 2135.7,1741.6 2120.4,1732.3 2081.3,1737.1 2068.3,1727.9 2028.0,1748.6 1996.5,1756.2 1968.3,1781.8 1952.0,1774.7 1925.9,1783.4 1825.9,1733.4 1790.0,1735.5 1760.4,1725.3 1730.0,1725.3 1708.3,1719.9 1680.0,1719.9 1653.9,1709.5 1647.4,1709.0 1627.8,1718.2 1612.6,1707.3 1599.6,1706.2 1571.3,1724.7 1549.6,1720.8 1530.0,1731.2 1506.1,1736.0 1482.2,1747.5 1469.1,1741.6 1438.7,1737.3 1415.9,1725.3 1388.7,1725.3 1251.7,1707.3 1242.4,1701.8" fill="#fffff6" stroke="#fffff6" stroke-width="5" stroke-linejoin="round"/></g>
<line x1="1235.2" x2="2920" y1="1403.0" y2="1403.0" stroke="#6f7276" stroke-opacity="1" stroke-width="2.7" stroke-dasharray="17.2 12.66"/>
<line x1="1235.2" x2="2920" y1="1480.3" y2="1480.3" stroke="#7c2659" stroke-opacity="1" stroke-width="2.7" stroke-dasharray="17.2 12.66"/>
<line x1="1235.2" x2="2920" y1="1557.7" y2="1557.7" stroke="#b3741c" stroke-opacity="1" stroke-width="2.7" stroke-dasharray="17.2 12.66"/>
<line x1="1235.2" x2="2920" y1="1635.2" y2="1635.2" stroke="#6f7276" stroke-opacity="1" stroke-width="2.7" stroke-dasharray="17.2 12.66"/>
<line x1="1235.2" x2="2920" y1="1712.7" y2="1712.7" stroke="#6f7276" stroke-opacity="1" stroke-width="2.7" stroke-dasharray="17.2 12.66"/>
<polygon class="fill-teal" clip-path="url(#c2t)" points="1242.4,1789.0 1242.4,1560.0 1247.0,1630.7 1252.8,1642.6 1271.3,1657.4 1276.1,1557.8 1281.5,1432.4 1287.0,1557.8 1290.4,1630.7 1304.6,1643.3 1317.0,1643.3 1325.0,1557.8 1327.6,1543.7 1345.2,1588.3 1345.2,1643.3 1372.4,1637.8 1393.0,1643.0 1417.4,1637.8 1423.0,1643.0 1433.3,1637.8 1449.1,1642.6 1452.2,1657.2 1467.0,1647.0 1470.2,1647.0 1475.2,1557.8 1478.5,1500.2 1482.6,1517.6 1487.8,1495.2 1489.3,1557.8 1491.5,1637.8 1500.2,1647.0 1509.3,1642.6 1519.8,1647.4 1525.7,1557.8 1528.9,1525.7 1533.9,1543.0 1541.3,1536.5 1543.0,1557.8 1544.6,1637.8 1557.6,1647.0 1569.1,1647.0 1576.1,1557.8 1579.3,1516.5 1585.0,1527.4 1592.6,1523.7 1594.1,1557.8 1597.0,1635.0 1610.4,1647.0 1619.1,1649.8 1624.6,1557.8 1625.7,1547.0 1631.1,1525.2 1634.8,1536.5 1642.0,1532.8 1643.7,1557.8 1645.2,1630.7 1653.9,1643.0 1664.3,1647.0 1673.5,1643.0 1675.7,1557.8 1676.7,1552.4 1677.8,1557.8 1680.4,1692.6 1687.6,1622.6 1790.0,1622.6 1824.8,1622.6 1824.8,1688.9 1841.5,1688.9 1844.3,1699.1 1867.2,1699.1 1876.3,1692.6 1892.2,1692.6 1899.8,1699.1 1922.6,1699.1 1929.1,1557.8 1932.4,1519.8 1942.2,1565.4 1947.0,1653.5 1952.0,1660.4 1970.4,1660.4 1980.2,1557.8 1983.5,1526.7 1992.2,1569.8 1993.3,1647.0 2017.8,1668.0 2020.0,1666.5 2023.7,1557.8 2025.4,1554.6 2034.6,1572.0 2038.5,1574.6 2040.4,1642.2 2061.7,1640.4 2062.8,1645.4 2082.4,1639.8 2100.9,1645.4 2115.0,1639.8 2134.1,1641.5 2146.5,1638.3 2168.3,1639.3 2179.1,1557.8 2179.8,1536.1 2193.3,1566.1 2199.8,1635.0 2212.8,1642.2 2218.3,1642.2 2229.1,1557.8 2231.3,1527.8 2243.3,1566.1 2249.1,1632.2 2257.4,1641.5 2268.3,1645.9 2271.5,1638.3 2280.2,1480.7 2283.9,1449.6 2288.3,1557.8 2298.7,1637.2 2305.2,1645.9 2313.9,1647.0 2327.0,1631.7 2328.0,1480.7 2329.3,1436.5 2333.5,1553.5 2338.9,1557.8 2343.3,1564.3 2350.0,1640.7 2358.8,1640.0 2365.4,1644.0 2370.9,1638.5 2375.9,1557.7 2377.5,1480.3 2380.1,1446.9 2383.0,1480.3 2390.6,1557.7 2397.2,1637.4 2410.4,1646.9 2426.9,1641.4 2431.3,1645.8 2455.5,1640.0 2469.7,1644.0 2499.4,1635.2 2506.4,1641.1 2515.9,1644.0 2524.7,1557.7 2525.8,1550.6 2529.7,1535.7 2538.5,1551.7 2539.4,1557.7 2545.6,1630.8 2556.5,1641.1 2570.4,1644.0 2573.7,1636.3 2577.4,1557.7 2578.5,1529.7 2588.0,1546.7 2589.5,1557.7 2596.5,1641.1 2599.4,1630.4 2602.7,1629.3 2611.5,1643.3 2614.8,1644.7 2624.7,1638.5 2629.0,1557.7 2631.9,1521.0 2640.0,1542.9 2644.4,1567.1 2649.3,1640.7 2659.1,1631.9 2671.2,1646.2 2676.3,1557.7 2679.6,1512.6 2691.0,1552.8 2691.7,1557.7 2700.9,1646.2 2712.5,1637.9 2722.4,1645.1 2726.4,1557.7 2729.5,1523.6 2740.0,1556.1 2743.3,1639.6 2755.4,1641.8 2764.2,1636.3 2773.0,1641.8 2786.1,1646.2 2796.0,1637.9 2804.8,1645.8 2817.6,1635.2 2824.6,1557.7 2826.1,1532.4 2827.9,1557.7 2831.2,1637.9 2844.4,1637.9 2853.2,1644.0 2867.4,1647.3 2874.0,1557.7 2881.7,1481.8 2893.8,1523.2 2896.0,1557.7 2900.4,1633.0 2916.0,1641.8 2943.3,1651.7 2943.3,1789.0" fill="url(#c2g)"/>
<polygon class="fill-orange" clip-path="url(#c2o)" points="1242.4,1789.0 1242.4,1560.0 1247.0,1630.7 1252.8,1642.6 1271.3,1657.4 1276.1,1557.8 1281.5,1432.4 1287.0,1557.8 1290.4,1630.7 1304.6,1643.3 1317.0,1643.3 1325.0,1557.8 1327.6,1543.7 1345.2,1588.3 1345.2,1643.3 1372.4,1637.8 1393.0,1643.0 1417.4,1637.8 1423.0,1643.0 1433.3,1637.8 1449.1,1642.6 1452.2,1657.2 1467.0,1647.0 1470.2,1647.0 1475.2,1557.8 1478.5,1500.2 1482.6,1517.6 1487.8,1495.2 1489.3,1557.8 1491.5,1637.8 1500.2,1647.0 1509.3,1642.6 1519.8,1647.4 1525.7,1557.8 1528.9,1525.7 1533.9,1543.0 1541.3,1536.5 1543.0,1557.8 1544.6,1637.8 1557.6,1647.0 1569.1,1647.0 1576.1,1557.8 1579.3,1516.5 1585.0,1527.4 1592.6,1523.7 1594.1,1557.8 1597.0,1635.0 1610.4,1647.0 1619.1,1649.8 1624.6,1557.8 1625.7,1547.0 1631.1,1525.2 1634.8,1536.5 1642.0,1532.8 1643.7,1557.8 1645.2,1630.7 1653.9,1643.0 1664.3,1647.0 1673.5,1643.0 1675.7,1557.8 1676.7,1552.4 1677.8,1557.8 1680.4,1692.6 1687.6,1622.6 1790.0,1622.6 1824.8,1622.6 1824.8,1688.9 1841.5,1688.9 1844.3,1699.1 1867.2,1699.1 1876.3,1692.6 1892.2,1692.6 1899.8,1699.1 1922.6,1699.1 1929.1,1557.8 1932.4,1519.8 1942.2,1565.4 1947.0,1653.5 1952.0,1660.4 1970.4,1660.4 1980.2,1557.8 1983.5,1526.7 1992.2,1569.8 1993.3,1647.0 2017.8,1668.0 2020.0,1666.5 2023.7,1557.8 2025.4,1554.6 2034.6,1572.0 2038.5,1574.6 2040.4,1642.2 2061.7,1640.4 2062.8,1645.4 2082.4,1639.8 2100.9,1645.4 2115.0,1639.8 2134.1,1641.5 2146.5,1638.3 2168.3,1639.3 2179.1,1557.8 2179.8,1536.1 2193.3,1566.1 2199.8,1635.0 2212.8,1642.2 2218.3,1642.2 2229.1,1557.8 2231.3,1527.8 2243.3,1566.1 2249.1,1632.2 2257.4,1641.5 2268.3,1645.9 2271.5,1638.3 2280.2,1480.7 2283.9,1449.6 2288.3,1557.8 2298.7,1637.2 2305.2,1645.9 2313.9,1647.0 2327.0,1631.7 2328.0,1480.7 2329.3,1436.5 2333.5,1553.5 2338.9,1557.8 2343.3,1564.3 2350.0,1640.7 2358.8,1640.0 2365.4,1644.0 2370.9,1638.5 2375.9,1557.7 2377.5,1480.3 2380.1,1446.9 2383.0,1480.3 2390.6,1557.7 2397.2,1637.4 2410.4,1646.9 2426.9,1641.4 2431.3,1645.8 2455.5,1640.0 2469.7,1644.0 2499.4,1635.2 2506.4,1641.1 2515.9,1644.0 2524.7,1557.7 2525.8,1550.6 2529.7,1535.7 2538.5,1551.7 2539.4,1557.7 2545.6,1630.8 2556.5,1641.1 2570.4,1644.0 2573.7,1636.3 2577.4,1557.7 2578.5,1529.7 2588.0,1546.7 2589.5,1557.7 2596.5,1641.1 2599.4,1630.4 2602.7,1629.3 2611.5,1643.3 2614.8,1644.7 2624.7,1638.5 2629.0,1557.7 2631.9,1521.0 2640.0,1542.9 2644.4,1567.1 2649.3,1640.7 2659.1,1631.9 2671.2,1646.2 2676.3,1557.7 2679.6,1512.6 2691.0,1552.8 2691.7,1557.7 2700.9,1646.2 2712.5,1637.9 2722.4,1645.1 2726.4,1557.7 2729.5,1523.6 2740.0,1556.1 2743.3,1639.6 2755.4,1641.8 2764.2,1636.3 2773.0,1641.8 2786.1,1646.2 2796.0,1637.9 2804.8,1645.8 2817.6,1635.2 2824.6,1557.7 2826.1,1532.4 2827.9,1557.7 2831.2,1637.9 2844.4,1637.9 2853.2,1644.0 2867.4,1647.3 2874.0,1557.7 2881.7,1481.8 2893.8,1523.2 2896.0,1557.7 2900.4,1633.0 2916.0,1641.8 2943.3,1651.7 2943.3,1789.0" fill="#f39318" fill-opacity=".62"/>
<polygon class="fill-pink" clip-path="url(#c2p)" points="1242.4,1789.0 1242.4,1560.0 1247.0,1630.7 1252.8,1642.6 1271.3,1657.4 1276.1,1557.8 1281.5,1432.4 1287.0,1557.8 1290.4,1630.7 1304.6,1643.3 1317.0,1643.3 1325.0,1557.8 1327.6,1543.7 1345.2,1588.3 1345.2,1643.3 1372.4,1637.8 1393.0,1643.0 1417.4,1637.8 1423.0,1643.0 1433.3,1637.8 1449.1,1642.6 1452.2,1657.2 1467.0,1647.0 1470.2,1647.0 1475.2,1557.8 1478.5,1500.2 1482.6,1517.6 1487.8,1495.2 1489.3,1557.8 1491.5,1637.8 1500.2,1647.0 1509.3,1642.6 1519.8,1647.4 1525.7,1557.8 1528.9,1525.7 1533.9,1543.0 1541.3,1536.5 1543.0,1557.8 1544.6,1637.8 1557.6,1647.0 1569.1,1647.0 1576.1,1557.8 1579.3,1516.5 1585.0,1527.4 1592.6,1523.7 1594.1,1557.8 1597.0,1635.0 1610.4,1647.0 1619.1,1649.8 1624.6,1557.8 1625.7,1547.0 1631.1,1525.2 1634.8,1536.5 1642.0,1532.8 1643.7,1557.8 1645.2,1630.7 1653.9,1643.0 1664.3,1647.0 1673.5,1643.0 1675.7,1557.8 1676.7,1552.4 1677.8,1557.8 1680.4,1692.6 1687.6,1622.6 1790.0,1622.6 1824.8,1622.6 1824.8,1688.9 1841.5,1688.9 1844.3,1699.1 1867.2,1699.1 1876.3,1692.6 1892.2,1692.6 1899.8,1699.1 1922.6,1699.1 1929.1,1557.8 1932.4,1519.8 1942.2,1565.4 1947.0,1653.5 1952.0,1660.4 1970.4,1660.4 1980.2,1557.8 1983.5,1526.7 1992.2,1569.8 1993.3,1647.0 2017.8,1668.0 2020.0,1666.5 2023.7,1557.8 2025.4,1554.6 2034.6,1572.0 2038.5,1574.6 2040.4,1642.2 2061.7,1640.4 2062.8,1645.4 2082.4,1639.8 2100.9,1645.4 2115.0,1639.8 2134.1,1641.5 2146.5,1638.3 2168.3,1639.3 2179.1,1557.8 2179.8,1536.1 2193.3,1566.1 2199.8,1635.0 2212.8,1642.2 2218.3,1642.2 2229.1,1557.8 2231.3,1527.8 2243.3,1566.1 2249.1,1632.2 2257.4,1641.5 2268.3,1645.9 2271.5,1638.3 2280.2,1480.7 2283.9,1449.6 2288.3,1557.8 2298.7,1637.2 2305.2,1645.9 2313.9,1647.0 2327.0,1631.7 2328.0,1480.7 2329.3,1436.5 2333.5,1553.5 2338.9,1557.8 2343.3,1564.3 2350.0,1640.7 2358.8,1640.0 2365.4,1644.0 2370.9,1638.5 2375.9,1557.7 2377.5,1480.3 2380.1,1446.9 2383.0,1480.3 2390.6,1557.7 2397.2,1637.4 2410.4,1646.9 2426.9,1641.4 2431.3,1645.8 2455.5,1640.0 2469.7,1644.0 2499.4,1635.2 2506.4,1641.1 2515.9,1644.0 2524.7,1557.7 2525.8,1550.6 2529.7,1535.7 2538.5,1551.7 2539.4,1557.7 2545.6,1630.8 2556.5,1641.1 2570.4,1644.0 2573.7,1636.3 2577.4,1557.7 2578.5,1529.7 2588.0,1546.7 2589.5,1557.7 2596.5,1641.1 2599.4,1630.4 2602.7,1629.3 2611.5,1643.3 2614.8,1644.7 2624.7,1638.5 2629.0,1557.7 2631.9,1521.0 2640.0,1542.9 2644.4,1567.1 2649.3,1640.7 2659.1,1631.9 2671.2,1646.2 2676.3,1557.7 2679.6,1512.6 2691.0,1552.8 2691.7,1557.7 2700.9,1646.2 2712.5,1637.9 2722.4,1645.1 2726.4,1557.7 2729.5,1523.6 2740.0,1556.1 2743.3,1639.6 2755.4,1641.8 2764.2,1636.3 2773.0,1641.8 2786.1,1646.2 2796.0,1637.9 2804.8,1645.8 2817.6,1635.2 2824.6,1557.7 2826.1,1532.4 2827.9,1557.7 2831.2,1637.9 2844.4,1637.9 2853.2,1644.0 2867.4,1647.3 2874.0,1557.7 2881.7,1481.8 2893.8,1523.2 2896.0,1557.7 2900.4,1633.0 2916.0,1641.8 2943.3,1651.7 2943.3,1789.0" fill="#c4276f" fill-opacity=".8"/>
<polyline clip-path="url(#c2t)" points="1242.4,1560.0 1247.0,1630.7 1252.8,1642.6 1271.3,1657.4 1276.1,1557.8 1281.5,1432.4 1287.0,1557.8 1290.4,1630.7 1304.6,1643.3 1317.0,1643.3 1325.0,1557.8 1327.6,1543.7 1345.2,1588.3 1345.2,1643.3 1372.4,1637.8 1393.0,1643.0 1417.4,1637.8 1423.0,1643.0 1433.3,1637.8 1449.1,1642.6 1452.2,1657.2 1467.0,1647.0 1470.2,1647.0 1475.2,1557.8 1478.5,1500.2 1482.6,1517.6 1487.8,1495.2 1489.3,1557.8 1491.5,1637.8 1500.2,1647.0 1509.3,1642.6 1519.8,1647.4 1525.7,1557.8 1528.9,1525.7 1533.9,1543.0 1541.3,1536.5 1543.0,1557.8 1544.6,1637.8 1557.6,1647.0 1569.1,1647.0 1576.1,1557.8 1579.3,1516.5 1585.0,1527.4 1592.6,1523.7 1594.1,1557.8 1597.0,1635.0 1610.4,1647.0 1619.1,1649.8 1624.6,1557.8 1625.7,1547.0 1631.1,1525.2 1634.8,1536.5 1642.0,1532.8 1643.7,1557.8 1645.2,1630.7 1653.9,1643.0 1664.3,1647.0 1673.5,1643.0 1675.7,1557.8 1676.7,1552.4 1677.8,1557.8 1680.4,1692.6 1687.6,1622.6 1790.0,1622.6 1824.8,1622.6 1824.8,1688.9 1841.5,1688.9 1844.3,1699.1 1867.2,1699.1 1876.3,1692.6 1892.2,1692.6 1899.8,1699.1 1922.6,1699.1 1929.1,1557.8 1932.4,1519.8 1942.2,1565.4 1947.0,1653.5 1952.0,1660.4 1970.4,1660.4 1980.2,1557.8 1983.5,1526.7 1992.2,1569.8 1993.3,1647.0 2017.8,1668.0 2020.0,1666.5 2023.7,1557.8 2025.4,1554.6 2034.6,1572.0 2038.5,1574.6 2040.4,1642.2 2061.7,1640.4 2062.8,1645.4 2082.4,1639.8 2100.9,1645.4 2115.0,1639.8 2134.1,1641.5 2146.5,1638.3 2168.3,1639.3 2179.1,1557.8 2179.8,1536.1 2193.3,1566.1 2199.8,1635.0 2212.8,1642.2 2218.3,1642.2 2229.1,1557.8 2231.3,1527.8 2243.3,1566.1 2249.1,1632.2 2257.4,1641.5 2268.3,1645.9 2271.5,1638.3 2280.2,1480.7 2283.9,1449.6 2288.3,1557.8 2298.7,1637.2 2305.2,1645.9 2313.9,1647.0 2327.0,1631.7 2328.0,1480.7 2329.3,1436.5 2333.5,1553.5 2338.9,1557.8 2343.3,1564.3 2350.0,1640.7 2358.8,1640.0 2365.4,1644.0 2370.9,1638.5 2375.9,1557.7 2377.5,1480.3 2380.1,1446.9 2383.0,1480.3 2390.6,1557.7 2397.2,1637.4 2410.4,1646.9 2426.9,1641.4 2431.3,1645.8 2455.5,1640.0 2469.7,1644.0 2499.4,1635.2 2506.4,1641.1 2515.9,1644.0 2524.7,1557.7 2525.8,1550.6 2529.7,1535.7 2538.5,1551.7 2539.4,1557.7 2545.6,1630.8 2556.5,1641.1 2570.4,1644.0 2573.7,1636.3 2577.4,1557.7 2578.5,1529.7 2588.0,1546.7 2589.5,1557.7 2596.5,1641.1 2599.4,1630.4 2602.7,1629.3 2611.5,1643.3 2614.8,1644.7 2624.7,1638.5 2629.0,1557.7 2631.9,1521.0 2640.0,1542.9 2644.4,1567.1 2649.3,1640.7 2659.1,1631.9 2671.2,1646.2 2676.3,1557.7 2679.6,1512.6 2691.0,1552.8 2691.7,1557.7 2700.9,1646.2 2712.5,1637.9 2722.4,1645.1 2726.4,1557.7 2729.5,1523.6 2740.0,1556.1 2743.3,1639.6 2755.4,1641.8 2764.2,1636.3 2773.0,1641.8 2786.1,1646.2 2796.0,1637.9 2804.8,1645.8 2817.6,1635.2 2824.6,1557.7 2826.1,1532.4 2827.9,1557.7 2831.2,1637.9 2844.4,1637.9 2853.2,1644.0 2867.4,1647.3 2874.0,1557.7 2881.7,1481.8 2893.8,1523.2 2896.0,1557.7 2900.4,1633.0 2916.0,1641.8 2943.3,1651.7" fill="none" stroke="#38cfc0" stroke-width="2.6" stroke-linejoin="miter"/>
<polyline clip-path="url(#c2o)" points="1242.4,1560.0 1247.0,1630.7 1252.8,1642.6 1271.3,1657.4 1276.1,1557.8 1281.5,1432.4 1287.0,1557.8 1290.4,1630.7 1304.6,1643.3 1317.0,1643.3 1325.0,1557.8 1327.6,1543.7 1345.2,1588.3 1345.2,1643.3 1372.4,1637.8 1393.0,1643.0 1417.4,1637.8 1423.0,1643.0 1433.3,1637.8 1449.1,1642.6 1452.2,1657.2 1467.0,1647.0 1470.2,1647.0 1475.2,1557.8 1478.5,1500.2 1482.6,1517.6 1487.8,1495.2 1489.3,1557.8 1491.5,1637.8 1500.2,1647.0 1509.3,1642.6 1519.8,1647.4 1525.7,1557.8 1528.9,1525.7 1533.9,1543.0 1541.3,1536.5 1543.0,1557.8 1544.6,1637.8 1557.6,1647.0 1569.1,1647.0 1576.1,1557.8 1579.3,1516.5 1585.0,1527.4 1592.6,1523.7 1594.1,1557.8 1597.0,1635.0 1610.4,1647.0 1619.1,1649.8 1624.6,1557.8 1625.7,1547.0 1631.1,1525.2 1634.8,1536.5 1642.0,1532.8 1643.7,1557.8 1645.2,1630.7 1653.9,1643.0 1664.3,1647.0 1673.5,1643.0 1675.7,1557.8 1676.7,1552.4 1677.8,1557.8 1680.4,1692.6 1687.6,1622.6 1790.0,1622.6 1824.8,1622.6 1824.8,1688.9 1841.5,1688.9 1844.3,1699.1 1867.2,1699.1 1876.3,1692.6 1892.2,1692.6 1899.8,1699.1 1922.6,1699.1 1929.1,1557.8 1932.4,1519.8 1942.2,1565.4 1947.0,1653.5 1952.0,1660.4 1970.4,1660.4 1980.2,1557.8 1983.5,1526.7 1992.2,1569.8 1993.3,1647.0 2017.8,1668.0 2020.0,1666.5 2023.7,1557.8 2025.4,1554.6 2034.6,1572.0 2038.5,1574.6 2040.4,1642.2 2061.7,1640.4 2062.8,1645.4 2082.4,1639.8 2100.9,1645.4 2115.0,1639.8 2134.1,1641.5 2146.5,1638.3 2168.3,1639.3 2179.1,1557.8 2179.8,1536.1 2193.3,1566.1 2199.8,1635.0 2212.8,1642.2 2218.3,1642.2 2229.1,1557.8 2231.3,1527.8 2243.3,1566.1 2249.1,1632.2 2257.4,1641.5 2268.3,1645.9 2271.5,1638.3 2280.2,1480.7 2283.9,1449.6 2288.3,1557.8 2298.7,1637.2 2305.2,1645.9 2313.9,1647.0 2327.0,1631.7 2328.0,1480.7 2329.3,1436.5 2333.5,1553.5 2338.9,1557.8 2343.3,1564.3 2350.0,1640.7 2358.8,1640.0 2365.4,1644.0 2370.9,1638.5 2375.9,1557.7 2377.5,1480.3 2380.1,1446.9 2383.0,1480.3 2390.6,1557.7 2397.2,1637.4 2410.4,1646.9 2426.9,1641.4 2431.3,1645.8 2455.5,1640.0 2469.7,1644.0 2499.4,1635.2 2506.4,1641.1 2515.9,1644.0 2524.7,1557.7 2525.8,1550.6 2529.7,1535.7 2538.5,1551.7 2539.4,1557.7 2545.6,1630.8 2556.5,1641.1 2570.4,1644.0 2573.7,1636.3 2577.4,1557.7 2578.5,1529.7 2588.0,1546.7 2589.5,1557.7 2596.5,1641.1 2599.4,1630.4 2602.7,1629.3 2611.5,1643.3 2614.8,1644.7 2624.7,1638.5 2629.0,1557.7 2631.9,1521.0 2640.0,1542.9 2644.4,1567.1 2649.3,1640.7 2659.1,1631.9 2671.2,1646.2 2676.3,1557.7 2679.6,1512.6 2691.0,1552.8 2691.7,1557.7 2700.9,1646.2 2712.5,1637.9 2722.4,1645.1 2726.4,1557.7 2729.5,1523.6 2740.0,1556.1 2743.3,1639.6 2755.4,1641.8 2764.2,1636.3 2773.0,1641.8 2786.1,1646.2 2796.0,1637.9 2804.8,1645.8 2817.6,1635.2 2824.6,1557.7 2826.1,1532.4 2827.9,1557.7 2831.2,1637.9 2844.4,1637.9 2853.2,1644.0 2867.4,1647.3 2874.0,1557.7 2881.7,1481.8 2893.8,1523.2 2896.0,1557.7 2900.4,1633.0 2916.0,1641.8 2943.3,1651.7" fill="none" stroke="#f39318" stroke-width="2.6" stroke-linejoin="miter"/>
<polyline clip-path="url(#c2p)" points="1242.4,1560.0 1247.0,1630.7 1252.8,1642.6 1271.3,1657.4 1276.1,1557.8 1281.5,1432.4 1287.0,1557.8 1290.4,1630.7 1304.6,1643.3 1317.0,1643.3 1325.0,1557.8 1327.6,1543.7 1345.2,1588.3 1345.2,1643.3 1372.4,1637.8 1393.0,1643.0 1417.4,1637.8 1423.0,1643.0 1433.3,1637.8 1449.1,1642.6 1452.2,1657.2 1467.0,1647.0 1470.2,1647.0 1475.2,1557.8 1478.5,1500.2 1482.6,1517.6 1487.8,1495.2 1489.3,1557.8 1491.5,1637.8 1500.2,1647.0 1509.3,1642.6 1519.8,1647.4 1525.7,1557.8 1528.9,1525.7 1533.9,1543.0 1541.3,1536.5 1543.0,1557.8 1544.6,1637.8 1557.6,1647.0 1569.1,1647.0 1576.1,1557.8 1579.3,1516.5 1585.0,1527.4 1592.6,1523.7 1594.1,1557.8 1597.0,1635.0 1610.4,1647.0 1619.1,1649.8 1624.6,1557.8 1625.7,1547.0 1631.1,1525.2 1634.8,1536.5 1642.0,1532.8 1643.7,1557.8 1645.2,1630.7 1653.9,1643.0 1664.3,1647.0 1673.5,1643.0 1675.7,1557.8 1676.7,1552.4 1677.8,1557.8 1680.4,1692.6 1687.6,1622.6 1790.0,1622.6 1824.8,1622.6 1824.8,1688.9 1841.5,1688.9 1844.3,1699.1 1867.2,1699.1 1876.3,1692.6 1892.2,1692.6 1899.8,1699.1 1922.6,1699.1 1929.1,1557.8 1932.4,1519.8 1942.2,1565.4 1947.0,1653.5 1952.0,1660.4 1970.4,1660.4 1980.2,1557.8 1983.5,1526.7 1992.2,1569.8 1993.3,1647.0 2017.8,1668.0 2020.0,1666.5 2023.7,1557.8 2025.4,1554.6 2034.6,1572.0 2038.5,1574.6 2040.4,1642.2 2061.7,1640.4 2062.8,1645.4 2082.4,1639.8 2100.9,1645.4 2115.0,1639.8 2134.1,1641.5 2146.5,1638.3 2168.3,1639.3 2179.1,1557.8 2179.8,1536.1 2193.3,1566.1 2199.8,1635.0 2212.8,1642.2 2218.3,1642.2 2229.1,1557.8 2231.3,1527.8 2243.3,1566.1 2249.1,1632.2 2257.4,1641.5 2268.3,1645.9 2271.5,1638.3 2280.2,1480.7 2283.9,1449.6 2288.3,1557.8 2298.7,1637.2 2305.2,1645.9 2313.9,1647.0 2327.0,1631.7 2328.0,1480.7 2329.3,1436.5 2333.5,1553.5 2338.9,1557.8 2343.3,1564.3 2350.0,1640.7 2358.8,1640.0 2365.4,1644.0 2370.9,1638.5 2375.9,1557.7 2377.5,1480.3 2380.1,1446.9 2383.0,1480.3 2390.6,1557.7 2397.2,1637.4 2410.4,1646.9 2426.9,1641.4 2431.3,1645.8 2455.5,1640.0 2469.7,1644.0 2499.4,1635.2 2506.4,1641.1 2515.9,1644.0 2524.7,1557.7 2525.8,1550.6 2529.7,1535.7 2538.5,1551.7 2539.4,1557.7 2545.6,1630.8 2556.5,1641.1 2570.4,1644.0 2573.7,1636.3 2577.4,1557.7 2578.5,1529.7 2588.0,1546.7 2589.5,1557.7 2596.5,1641.1 2599.4,1630.4 2602.7,1629.3 2611.5,1643.3 2614.8,1644.7 2624.7,1638.5 2629.0,1557.7 2631.9,1521.0 2640.0,1542.9 2644.4,1567.1 2649.3,1640.7 2659.1,1631.9 2671.2,1646.2 2676.3,1557.7 2679.6,1512.6 2691.0,1552.8 2691.7,1557.7 2700.9,1646.2 2712.5,1637.9 2722.4,1645.1 2726.4,1557.7 2729.5,1523.6 2740.0,1556.1 2743.3,1639.6 2755.4,1641.8 2764.2,1636.3 2773.0,1641.8 2786.1,1646.2 2796.0,1637.9 2804.8,1645.8 2817.6,1635.2 2824.6,1557.7 2826.1,1532.4 2827.9,1557.7 2831.2,1637.9 2844.4,1637.9 2853.2,1644.0 2867.4,1647.3 2874.0,1557.7 2881.7,1481.8 2893.8,1523.2 2896.0,1557.7 2900.4,1633.0 2916.0,1641.8 2943.3,1651.7" fill="none" stroke="#c4276f" stroke-width="2.6" stroke-linejoin="miter"/>
<rect x="1242" y="1786.3" width="1700" height="5.3" fill="#7f7f7f"/>
<rect x="1240.7" y="1791" width="2.6" height="88" fill="#858585"/>
<rect x="1232" y="1401" width="10" height="80.29999999999995" fill="#c4276f"/>
<rect x="1232" y="1481.3" width="10" height="77.40000000000009" fill="#f39318"/>
<rect x="1232" y="1558.7" width="10" height="232.89999999999998" fill="#38cfc0"/>
<text x="1134.8" y="1414.3" font-size="29.4" textLength="68.2" lengthAdjust="spacingAndGlyphs" fill="#a3a3a3">100%</text>
<text x="1150.5" y="1491.6" font-size="29.4" textLength="52.5" lengthAdjust="spacingAndGlyphs" fill="#a3a3a3">80%</text>
<text x="1150.5" y="1569.0" font-size="29.4" textLength="52.5" lengthAdjust="spacingAndGlyphs" fill="#a3a3a3">60%</text>
<text x="1150.5" y="1646.5" font-size="29.4" textLength="52.5" lengthAdjust="spacingAndGlyphs" fill="#a3a3a3">40%</text>
<text x="1150.5" y="1724.0" font-size="29.4" textLength="52.5" lengthAdjust="spacingAndGlyphs" fill="#a3a3a3">20%</text>
<text x="1166.0" y="1799.0" font-size="29.4" textLength="37.0" lengthAdjust="spacingAndGlyphs" fill="#a3a3a3">0%</text>
<g transform="translate(1132.2 1644) rotate(-90)"><text x="0.0" y="0.0" font-size="31.0" textLength="93.0" lengthAdjust="spacingAndGlyphs" fill="#a0a0a0">Percent</text></g>
<text x="1292.2" y="1839.1" font-size="29.1" textLength="30.0" lengthAdjust="spacingAndGlyphs" fill="#c8c8c8">16</text>
<text x="1399.2" y="1839.1" font-size="29.1" textLength="30.0" lengthAdjust="spacingAndGlyphs" fill="#c8c8c8">17</text>
<text x="1506.2" y="1839.1" font-size="29.1" textLength="30.0" lengthAdjust="spacingAndGlyphs" fill="#c8c8c8">18</text>
<text x="1613.2" y="1839.1" font-size="29.1" textLength="30.0" lengthAdjust="spacingAndGlyphs" fill="#c8c8c8">19</text>
<text x="1720.2" y="1839.1" font-size="29.1" textLength="30.0" lengthAdjust="spacingAndGlyphs" fill="#c8c8c8">20</text>
<text x="1827.2" y="1839.1" font-size="29.1" textLength="30.0" lengthAdjust="spacingAndGlyphs" fill="#c8c8c8">21</text>
<text x="1934.2" y="1839.1" font-size="29.1" textLength="30.0" lengthAdjust="spacingAndGlyphs" fill="#c8c8c8">22</text>
<text x="2041.2" y="1839.1" font-size="29.1" textLength="30.0" lengthAdjust="spacingAndGlyphs" fill="#c8c8c8">23</text>
<text x="2148.2" y="1839.1" font-size="29.1" textLength="30.0" lengthAdjust="spacingAndGlyphs" fill="#c8c8c8">24</text>
<text x="2255.2" y="1839.1" font-size="29.1" textLength="30.0" lengthAdjust="spacingAndGlyphs" fill="#c8c8c8">25</text>
<text x="2362.2" y="1839.1" font-size="29.1" textLength="30.0" lengthAdjust="spacingAndGlyphs" fill="#c8c8c8">26</text>
<text x="2469.2" y="1839.1" font-size="29.1" textLength="30.0" lengthAdjust="spacingAndGlyphs" fill="#c8c8c8">27</text>
<text x="2576.2" y="1839.1" font-size="29.1" textLength="30.0" lengthAdjust="spacingAndGlyphs" fill="#c8c8c8">28</text>
<text x="2683.2" y="1839.1" font-size="29.1" textLength="30.0" lengthAdjust="spacingAndGlyphs" fill="#c8c8c8">29</text>
<text x="2790.2" y="1839.1" font-size="29.1" textLength="30.0" lengthAdjust="spacingAndGlyphs" fill="#c8c8c8">30</text>
<text x="2897.2" y="1839.1" font-size="29.1" textLength="30.0" lengthAdjust="spacingAndGlyphs" fill="#c8c8c8">31</text>
<text x="1294.0" y="1878.9" font-size="29.1" textLength="58.8" lengthAdjust="spacingAndGlyphs" fill="#c8c8c8">NOV</text>
<rect x="2133.1" y="1375" width="3" height="411.29999999999995" fill="#e6e6e6"/>
<circle cx="2134.6" cy="1641.5" r="24.5" fill="#ffffff" fill-opacity=".28"/>
<circle cx="2134.6" cy="1641.5" r="10.2" fill="#ffffff" stroke="#38cfc0" stroke-width="3.4"/>
<polygon class="cursor" points="2153.3,1652.2 2163.1,1690.0 2169.7,1678.6 2177.8,1690.2 2183.7,1685.7 2174.5,1674.8 2187.3,1671.4" fill="#33373b" stroke="#ececec" stroke-width="2.5" stroke-linejoin="miter"/>
<g class="tooltip"><rect x="1994.7" y="1262" width="272" height="121.5" rx="8" fill="#000" fill-opacity=".5" filter="url(#blur)" transform="translate(0 6)"/>
<path d="M1994.7 1261.3h272v114.19999999999999a8 8 0 0 1 -8 8h-256a8 8 0 0 1 -8 -8z" fill="#222222"/>
<rect x="1994.7" y="1261.2" width="272.5" height="3" fill="#38cfc0"/>
<text x="2011.8" y="1309.6" font-size="30.8" textLength="237.9" lengthAdjust="spacingAndGlyphs" fill="#b4b4b4">NOV 25 10:30AM</text>
<text x="2011.6" y="1366.2" font-size="46.5" textLength="85.0" lengthAdjust="spacingAndGlyphs" fill="#ffffff" stroke="#ffffff" stroke-width=".9">38%</text>
</g>
<circle cx="1113.1" cy="1266.4" r="18.8" fill="#bdbdbd"/>
<circle cx="1113.2" cy="1256.4" r="2.9" fill="#151a21"/>
<path d="M1108.3 1262.3h8v10h1.6v3.4h-9.6v-3.4h3.1v-6.9h-3.1z" fill="#151a21"/>
<text x="1152.9" y="1279.0" font-size="31.4" textLength="686.6" lengthAdjust="spacingAndGlyphs" fill="#ffffff">MEMORY UTILIZATION - MANAGEMENT PLANE</text>
<rect x="1342" y="1541" width="184" height="140" rx="26" fill="#1c1c1c" fill-opacity=".2" filter="url(#soft)"/>
<path d="M1388.5 1578l-12.5 12.2l12.5 12.2M1483 1578l12.5 12.2l-12.5 12.2" fill="none" stroke="#ffffff" stroke-opacity=".3" stroke-width="3"/>
<rect x="1435" y="1560" width="1.5" height="60" fill="#ffffff" fill-opacity=".12"/>
<rect x="2762.5" y="1565" width="300" height="110" rx="55" fill="#1c1c1c" fill-opacity=".24" filter="url(#soft)"/>
<path d="M2800.6 1586.2l-8.4 7.6l8.4 8.7M2792.5 1593.8h21.5a11.7 11.7 0 1 1 -10.6 16.6" fill="none" stroke="#d8d8d8" stroke-opacity=".6" stroke-width="3"/>
<text x="2841.0" y="1612.9" font-size="29.8" textLength="84.0" lengthAdjust="spacingAndGlyphs" fill="#d8d8d8" fill-opacity=".6">Restart</text>
</g>
</svg>
</div>
</body>
</html>
